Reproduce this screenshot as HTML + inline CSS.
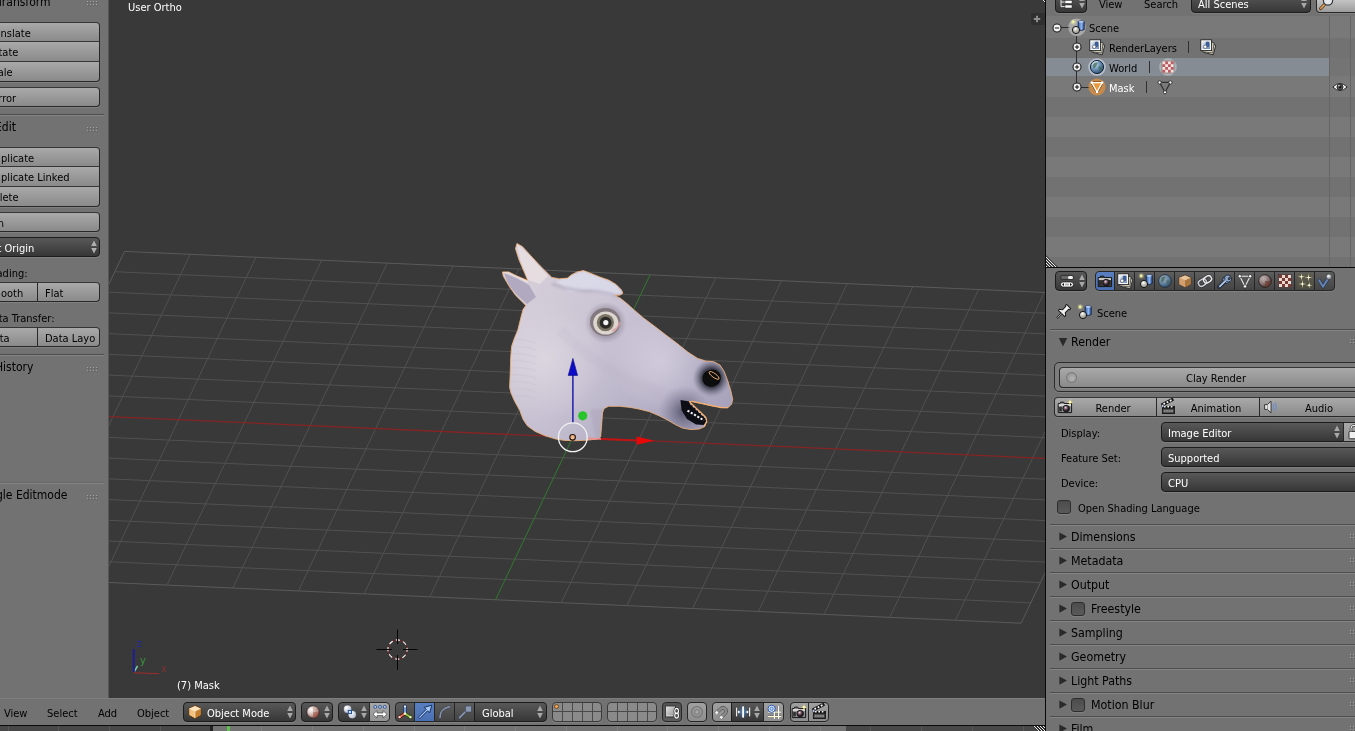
<!DOCTYPE html>
<html lang="en"><head><meta charset="utf-8"><title>Blender</title>
<style>
html,body{margin:0;padding:0;background:#727272;}
body{width:1355px;height:731px;overflow:hidden;position:relative;font-family:"DejaVu Sans Condensed","DejaVu Sans","Liberation Sans",sans-serif;font-size:11px;}
#root{position:absolute;left:0;top:0;width:1355px;height:731px;overflow:hidden;background:#727272;}
.t{position:absolute;white-space:nowrap;display:block;will-change:transform;}
.a{position:absolute;display:block;overflow:visible;}
.r{position:absolute;box-sizing:border-box;}
.btn{position:absolute;box-sizing:border-box;border:1px solid #282828;border-top-color:#363636;background:linear-gradient(#a9a9a9,#8a8a8a);box-shadow:0 1px 0 rgba(255,255,255,.10);}
.menu{position:absolute;box-sizing:border-box;border:1px solid #1c1c1c;background:linear-gradient(#585858,#373737);box-shadow:0 1px 0 rgba(255,255,255,.10);border-radius:4px;}
.tog{position:absolute;box-sizing:border-box;border:1px solid #262626;background:linear-gradient(#a0a0a0,#8e8e8e);box-shadow:0 1px 0 rgba(255,255,255,.10);}
.sep{position:absolute;height:1px;background:#4e4e4e;box-shadow:0 1px 0 rgba(255,255,255,.13);}
.clip{position:absolute;overflow:hidden;}
.clip>.in{position:absolute;width:1355px;height:731px;}
</style></head><body><div id="root">

<div class="r" style="left:109px;top:0;width:936px;height:698px;background:#393939;overflow:hidden">
<svg class="a" style="left:-109px;top:0" width="1355" height="731" viewBox="0 0 1355 731">
<defs><filter id="b03" x="-5%" y="-5%" width="110%" height="110%"><feGaussianBlur stdDeviation=".45"/></filter></defs>
<g stroke-width="1" fill="none"><line x1="-30.1" y1="576.3" x2="124.5" y2="251.4" stroke="#5a5a5a"/><line x1="-30.1" y1="576.3" x2="1021.1" y2="623.2" stroke="#5a5a5a"/><line x1="35.6" y1="579.3" x2="190.2" y2="254.3" stroke="#515151"/><line x1="-20.4" y1="556.0" x2="1030.8" y2="602.9" stroke="#515151"/><line x1="101.3" y1="582.2" x2="255.9" y2="257.2" stroke="#515151"/><line x1="-10.8" y1="535.7" x2="1040.4" y2="582.6" stroke="#515151"/><line x1="167.0" y1="585.1" x2="321.6" y2="260.2" stroke="#515151"/><line x1="-1.1" y1="515.4" x2="1050.1" y2="562.3" stroke="#515151"/><line x1="232.7" y1="588.1" x2="387.3" y2="263.1" stroke="#515151"/><line x1="8.6" y1="495.1" x2="1059.8" y2="542.0" stroke="#515151"/><line x1="298.4" y1="591.0" x2="453.0" y2="266.0" stroke="#515151"/><line x1="18.2" y1="474.8" x2="1069.4" y2="521.7" stroke="#515151"/><line x1="364.1" y1="593.9" x2="518.7" y2="269.0" stroke="#515151"/><line x1="27.9" y1="454.5" x2="1079.1" y2="501.4" stroke="#515151"/><line x1="429.8" y1="596.9" x2="584.4" y2="271.9" stroke="#515151"/><line x1="37.5" y1="434.2" x2="1088.7" y2="481.1" stroke="#515151"/><line x1="561.2" y1="602.7" x2="715.8" y2="277.8" stroke="#515151"/><line x1="56.9" y1="393.6" x2="1108.1" y2="440.4" stroke="#515151"/><line x1="626.9" y1="605.6" x2="781.5" y2="280.7" stroke="#515151"/><line x1="66.5" y1="373.2" x2="1117.7" y2="420.1" stroke="#515151"/><line x1="692.6" y1="608.6" x2="847.2" y2="283.6" stroke="#515151"/><line x1="76.2" y1="352.9" x2="1127.4" y2="399.8" stroke="#515151"/><line x1="758.3" y1="611.5" x2="912.9" y2="286.5" stroke="#515151"/><line x1="85.8" y1="332.6" x2="1137.0" y2="379.5" stroke="#515151"/><line x1="824.0" y1="614.4" x2="978.6" y2="289.5" stroke="#515151"/><line x1="95.5" y1="312.3" x2="1146.7" y2="359.2" stroke="#515151"/><line x1="889.7" y1="617.4" x2="1044.3" y2="292.4" stroke="#515151"/><line x1="105.2" y1="292.0" x2="1156.4" y2="338.9" stroke="#515151"/><line x1="955.4" y1="620.3" x2="1110.0" y2="295.3" stroke="#515151"/><line x1="114.8" y1="271.7" x2="1166.0" y2="318.6" stroke="#515151"/><line x1="1021.1" y1="623.2" x2="1175.7" y2="298.3" stroke="#5a5a5a"/><line x1="124.5" y1="251.4" x2="1175.7" y2="298.3" stroke="#5a5a5a"/><line x1="47.2" y1="413.9" x2="1098.4" y2="460.7" stroke="#862424" stroke-width="1.3"/><line x1="495.5" y1="599.8" x2="650.1" y2="274.8" stroke="#2f7a2f"/></g>
<g filter="url(#b03)"><defs>
<linearGradient id="hg" gradientUnits="userSpaceOnUse" x1="520" y1="270" x2="700" y2="440"><stop offset="0" stop-color="#d7d0da"/><stop offset=".5" stop-color="#c5bfd1"/><stop offset="1" stop-color="#a7a2bb"/></linearGradient>
<radialGradient id="hl1" gradientUnits="userSpaceOnUse" cx="660" cy="362" r="48"><stop offset="0" stop-color="#dcd6e6" stop-opacity=".6"/><stop offset="1" stop-color="#e4deea" stop-opacity="0"/></radialGradient>
<radialGradient id="hl2" gradientUnits="userSpaceOnUse" cx="545" cy="360" r="60"><stop offset="0" stop-color="#e2dce4" stop-opacity=".7"/><stop offset="1" stop-color="#e2dce4" stop-opacity="0"/></radialGradient>
<radialGradient id="sh1" gradientUnits="userSpaceOnUse" cx="684" cy="412" r="26"><stop offset="0" stop-color="#3a3a52" stop-opacity=".75"/><stop offset="1" stop-color="#6a6888" stop-opacity="0"/></radialGradient>
<radialGradient id="sh2" gradientUnits="userSpaceOnUse" cx="711.5" cy="378" r="19"><stop offset=".5" stop-color="#30323e" stop-opacity=".9"/><stop offset="1" stop-color="#70708a" stop-opacity="0"/></radialGradient>
<radialGradient id="eyeg" gradientUnits="userSpaceOnUse" cx="605.8" cy="322.7" r="21"><stop offset=".6" stop-color="#8a8290" stop-opacity=".7"/><stop offset="1" stop-color="#9a92a4" stop-opacity="0"/></radialGradient>
<clipPath id="hc"><path d="M516.9 243.5 L522.4 246.6 L530.6 255.5 L540.1 265.8 L548.4 274.0 L551.8 277.4 L559.3 278.8 L567.5 278.1 L571.6 274.7 L577.1 271.9 L583.5 270.6 L591.0 273.4 L599.6 276.9 L609.2 280.3 L616.0 284.4 L621.5 289.9 L622.9 293.3 L620.1 295.1 L614.7 295.4 L620.1 298.1 L627.0 303.6 L633.8 309.7 L643.4 317.9 L654.3 326.1 L665.6 334.8 L676.9 343.3 L687.8 352.1 L697.4 358.3 L705.6 361.0 L713.8 361.7 L720.0 365.1 L724.1 371.3 L727.5 380.2 L730.9 391.1 L732.7 399.3 L731.6 404.1 L728.2 407.6 L722.0 407.6 L712.5 405.9 L701.5 403.4 L691.9 401.4 L689.3 401.5 L697.0 409.0 L705.7 417.2 L706.7 421.3 L704.3 426.8 L698.9 429.1 L690.7 429.5 L682.5 428.1 L675.6 424.7 L667.4 419.9 L659.2 415.8 L649.6 411.7 L638.7 409.0 L630.4 407.4 L619.4 406.3 L608.5 406.3 L604.1 408.5 L602.5 412.8 L601.4 428.2 L600.6 436.9 L597.5 439.1 L586.6 440.2 L575.7 440.7 L564.7 440.4 L556.0 439.1 L545.0 435.8 L535.2 431.4 L527.5 426.0 L523.1 419.4 L519.8 410.6 L514.4 400.8 L511.0 393.0 L509.6 387.5 L510.3 371.0 L510.7 357.4 L511.6 346.4 L514.4 338.2 L517.8 330.0 L521.0 317.1 L523.0 309.6 L525.8 305.4 L522.4 302.0 L515.5 295.2 L508.7 285.6 L503.2 276.0 L502.5 271.9 L508.7 271.9 L516.9 276.0 L527.8 280.5 L523.0 269.2 L518.9 259.6 L515.5 248.7Z"/></clipPath>
<filter id="b1" x="-20%" y="-20%" width="140%" height="140%"><feGaussianBlur stdDeviation="1.2"/></filter>
<filter id="b05" x="-20%" y="-20%" width="140%" height="140%"><feGaussianBlur stdDeviation=".5"/></filter>
</defs><path d="M516.9 243.5 L522.4 246.6 L530.6 255.5 L540.1 265.8 L548.4 274.0 L551.8 277.4 L559.3 278.8 L567.5 278.1 L571.6 274.7 L577.1 271.9 L583.5 270.6 L591.0 273.4 L599.6 276.9 L609.2 280.3 L616.0 284.4 L621.5 289.9 L622.9 293.3 L620.1 295.1 L614.7 295.4 L620.1 298.1 L627.0 303.6 L633.8 309.7 L643.4 317.9 L654.3 326.1 L665.6 334.8 L676.9 343.3 L687.8 352.1 L697.4 358.3 L705.6 361.0 L713.8 361.7 L720.0 365.1 L724.1 371.3 L727.5 380.2 L730.9 391.1 L732.7 399.3 L731.6 404.1 L728.2 407.6 L722.0 407.6 L712.5 405.9 L701.5 403.4 L691.9 401.4 L689.3 401.5 L697.0 409.0 L705.7 417.2 L706.7 421.3 L704.3 426.8 L698.9 429.1 L690.7 429.5 L682.5 428.1 L675.6 424.7 L667.4 419.9 L659.2 415.8 L649.6 411.7 L638.7 409.0 L630.4 407.4 L619.4 406.3 L608.5 406.3 L604.1 408.5 L602.5 412.8 L601.4 428.2 L600.6 436.9 L597.5 439.1 L586.6 440.2 L575.7 440.7 L564.7 440.4 L556.0 439.1 L545.0 435.8 L535.2 431.4 L527.5 426.0 L523.1 419.4 L519.8 410.6 L514.4 400.8 L511.0 393.0 L509.6 387.5 L510.3 371.0 L510.7 357.4 L511.6 346.4 L514.4 338.2 L517.8 330.0 L521.0 317.1 L523.0 309.6 L525.8 305.4 L522.4 302.0 L515.5 295.2 L508.7 285.6 L503.2 276.0 L502.5 271.9 L508.7 271.9 L516.9 276.0 L527.8 280.5 L523.0 269.2 L518.9 259.6 L515.5 248.7Z" fill="url(#hg)"/><g clip-path="url(#hc)"><rect x="495" y="235" width="245" height="215" fill="url(#hl2)"/><rect x="495" y="235" width="245" height="215" fill="url(#hl1)"/><path d="M556 282 L570 276 L584 271 L600 277 L617 285 L622 293 L612 296 L590 290 L570 292Z" fill="#dfe0ee" opacity=".7" filter="url(#b1)"/><path d="M552 284 Q575 292 596 291 Q610 293 619 297" stroke="#a9a2b8" stroke-width="3" fill="none" opacity=".5" filter="url(#b1)"/><path d="M516.9 244 L530 256 L548 276 L540 284 L528 280 L521 262Z" fill="#e7dfe0" opacity=".85"/><path d="M504 273 L516 278 L529 285 L536 297 L527 304 L516 294 L508 284Z" fill="#aaa3bb" opacity=".85" filter="url(#b05)"/><path d="M503 272.5 L509 272.5 L517 276.5 L528 281.5" stroke="#eee6e6" stroke-width="1.6" fill="none"/><path d="M510 340 Q522 338 536 343" stroke="#bdb5c6" stroke-width="1.6" fill="none" opacity=".18" filter="url(#b05)"/><path d="M510 347 Q522 345 536 350" stroke="#bdb5c6" stroke-width="1.6" fill="none" opacity=".18" filter="url(#b05)"/><path d="M510 354 Q522 352 536 357" stroke="#bdb5c6" stroke-width="1.6" fill="none" opacity=".18" filter="url(#b05)"/><path d="M510 361 Q522 359 536 364" stroke="#bdb5c6" stroke-width="1.6" fill="none" opacity=".18" filter="url(#b05)"/><path d="M510 368 Q522 366 536 371" stroke="#bdb5c6" stroke-width="1.6" fill="none" opacity=".18" filter="url(#b05)"/><path d="M510 375 Q522 373 536 378" stroke="#bdb5c6" stroke-width="1.6" fill="none" opacity=".18" filter="url(#b05)"/><path d="M510 382 Q522 380 536 385" stroke="#bdb5c6" stroke-width="1.6" fill="none" opacity=".18" filter="url(#b05)"/><path d="M510 389 Q522 387 536 392" stroke="#bdb5c6" stroke-width="1.6" fill="none" opacity=".18" filter="url(#b05)"/><path d="M510 396 Q522 394 536 399" stroke="#bdb5c6" stroke-width="1.6" fill="none" opacity=".18" filter="url(#b05)"/><path d="M560 330 Q600 372 660 392 Q690 400 700 402" stroke="#b8b0c4" stroke-width="10" fill="none" opacity=".16" filter="url(#b1)"/><path d="M604 408 L604 440 L596 440 L590 410Z" fill="#aaa4b8" opacity=".5" filter="url(#b1)"/><rect x="650" y="380" width="70" height="60" fill="url(#sh1)"/><rect x="688" y="353" width="48" height="50" fill="url(#sh2)"/><circle cx="605.8" cy="322.7" r="21" fill="url(#eyeg)"/></g><ellipse cx="605.2" cy="322" rx="15.2" ry="14" fill="#7d7378" opacity=".85" filter="url(#b05)"/><ellipse cx="605.8" cy="323" rx="12.6" ry="11.6" fill="#ddd5cf"/><path d="M612 331 Q618 329 620 322" stroke="#d9a0a4" stroke-width="2" fill="none" opacity=".8"/><circle cx="605.4" cy="322.6" r="8.6" fill="#787364"/><circle cx="605.6" cy="322.8" r="6" fill="#2c2a28" filter="url(#b05)"/><circle cx="605.8" cy="322.6" r="2.6" fill="#f4f4f4"/><ellipse cx="711.6" cy="378.2" rx="9.3" ry="8.6" fill="#07070a" transform="rotate(-15 711.6 378.2)"/><ellipse cx="714.1" cy="375.4" rx="6" ry="2" fill="#0c0a0a" stroke="#f0b070" stroke-width=".9" transform="rotate(36 714.1 375.4)"/><path d="M680.5 400 L689.3 401.5 L705.7 417.2 L706.7 421.3 L703.5 425 L696 424.6 L687 419 L681.5 410Z" fill="#101018" filter="url(#b05)"/><path d="M687.5 410.6 L704 420.4" stroke="#f4f4f8" stroke-width="2" stroke-dasharray="2.2 1.6" fill="none"/><path d="M690 403.4 L705 417.6" stroke="#e8e4f0" stroke-width="1.1" stroke-dasharray="2.4 1.4" fill="none" opacity=".85"/><path d="M516.9 243.5 L522.4 246.6 L530.6 255.5 L540.1 265.8 L548.4 274.0 L551.8 277.4 L559.3 278.8 L567.5 278.1 L571.6 274.7 L577.1 271.9 L583.5 270.6 L591.0 273.4 L599.6 276.9 L609.2 280.3 L616.0 284.4 L621.5 289.9 L622.9 293.3 L620.1 295.1 L614.7 295.4 L620.1 298.1 L627.0 303.6 L633.8 309.7 L643.4 317.9 L654.3 326.1 L665.6 334.8 L676.9 343.3 L687.8 352.1 L697.4 358.3 L705.6 361.0 L713.8 361.7 L720.0 365.1 L724.1 371.3 L727.5 380.2 L730.9 391.1 L732.7 399.3 L731.6 404.1 L728.2 407.6 L722.0 407.6 L712.5 405.9 L701.5 403.4 L691.9 401.4 L689.3 401.5 L697.0 409.0 L705.7 417.2 L706.7 421.3 L704.3 426.8 L698.9 429.1 L690.7 429.5 L682.5 428.1 L675.6 424.7 L667.4 419.9 L659.2 415.8 L649.6 411.7 L638.7 409.0 L630.4 407.4 L619.4 406.3 L608.5 406.3 L604.1 408.5 L602.5 412.8 L601.4 428.2 L600.6 436.9 L597.5 439.1 L586.6 440.2 L575.7 440.7 L564.7 440.4 L556.0 439.1 L545.0 435.8 L535.2 431.4 L527.5 426.0 L523.1 419.4 L519.8 410.6 L514.4 400.8 L511.0 393.0 L509.6 387.5 L510.3 371.0 L510.7 357.4 L511.6 346.4 L514.4 338.2 L517.8 330.0 L521.0 317.1 L523.0 309.6 L525.8 305.4 L522.4 302.0 L515.5 295.2 L508.7 285.6 L503.2 276.0 L502.5 271.9 L508.7 271.9 L516.9 276.0 L527.8 280.5 L523.0 269.2 L518.9 259.6 L515.5 248.7Z" fill="none" stroke="#efb07a" stroke-width="1" stroke-linejoin="round" opacity=".85"/><path d="M691.9 401.4 L701.5 403.4 L712.5 405.9 L722 407.6 L728.2 407.6 M689.3 401.5 L697 409 L705.7 417.2 L706.7 421.3 L704.3 426.8" fill="none" stroke="#f4b070" stroke-width="1.2"/></g>
<path d="M588 438.4 L601 439 " stroke="#f09090" stroke-width="1.6"/><path d="M601 439 L637 440.5" stroke="#c01414" stroke-width="1.8"/><path d="M636.6 436.6 L654.6 440.8 L636.6 444.8Z" fill="#e80808"/><path d="M572.9 375 L572.9 423" stroke="#1212a8" stroke-width="1.4"/><path d="M572.9 358.4 L577.6 375.4 L568.2 375.4Z" fill="#0c0cc8" stroke="#08087a" stroke-width=".6"/><circle cx="582.7" cy="415.8" r="4.6" fill="#27c52b"/><circle cx="572.8" cy="437.3" r="14.4" fill="none" stroke="#f2f2f2" stroke-width="1.3"/><circle cx="572.5999999999999" cy="437.3" r="2.8" fill="#f0b68a" stroke="#1a1008" stroke-width="1.1"/>
<circle cx="397.5" cy="649.5" r="9.6" fill="none" stroke="#742222" stroke-width="1"/><circle cx="397.5" cy="649.5" r="9.6" fill="none" stroke="#ffffff" stroke-width="1.1" stroke-dasharray="4.3 3.24" stroke-dashoffset="2"/><path d="M376.5 649.5 L392.0 649.5 M403.0 649.5 L417.5 649.5 M397.5 629.5 L397.5 644.0 M397.5 655.0 L397.5 670.0" stroke="#050505" stroke-width="1"/>
<path d="M133.8 672.8 L159.2 673.8" stroke="#a02c2c" stroke-width="1.1"/><path d="M134.3 671.7 L137.6 665.8" stroke="#7fd0a0" stroke-width="1.5"/><path d="M133.8 672 L133.8 649" stroke="#1e1e98" stroke-width="2"/><text x="161.5" y="672" font-family='DejaVu Sans Condensed,DejaVu Sans,Liberation Sans,sans-serif' font-size="10" fill="#a03030" opacity=".75">x</text><text x="140" y="664" font-family='DejaVu Sans Condensed,DejaVu Sans,Liberation Sans,sans-serif' font-size="11" fill="#389638">y</text><text x="136.8" y="646.6" font-family='DejaVu Sans Condensed,DejaVu Sans,Liberation Sans,sans-serif' font-size="11" fill="#2828a0">z</text>
</svg>
</div>
<span class="t" style="left:127.9px;top:0.2px;font-size:11px;line-height:15px;color:#fff;">User Ortho</span>
<span class="t" style="left:177.3px;top:677.5px;font-size:11px;line-height:15px;color:#fff;">(7) Mask</span>
<div class="r" style="left:0;top:0;width:109px;height:698px;background:#727272;border-right:1px solid #575757"></div>
<div class="clip" style="left:0px;top:0px;width:108px;height:698px"><div class="in" style="left:0px;top:0px">
<span class="t" style="right:1304.8px;top:-6.5px;font-size:12px;line-height:16px;color:#000;">Transform</span>
<svg class="a" style="left:87px;top:1px" width="12" height="6"><rect x="1" y="1" width="1" height="1" fill="#5e5e5e"/><rect x="0" y="0" width="1" height="1" fill="#a4a4a4"/><rect x="1" y="4" width="1" height="1" fill="#5e5e5e"/><rect x="0" y="3" width="1" height="1" fill="#a4a4a4"/><rect x="4" y="1" width="1" height="1" fill="#5e5e5e"/><rect x="3" y="0" width="1" height="1" fill="#a4a4a4"/><rect x="4" y="4" width="1" height="1" fill="#5e5e5e"/><rect x="3" y="3" width="1" height="1" fill="#a4a4a4"/><rect x="7" y="1" width="1" height="1" fill="#5e5e5e"/><rect x="6" y="0" width="1" height="1" fill="#a4a4a4"/><rect x="7" y="4" width="1" height="1" fill="#5e5e5e"/><rect x="6" y="3" width="1" height="1" fill="#a4a4a4"/><rect x="10" y="1" width="1" height="1" fill="#5e5e5e"/><rect x="9" y="0" width="1" height="1" fill="#a4a4a4"/><rect x="10" y="4" width="1" height="1" fill="#5e5e5e"/><rect x="9" y="3" width="1" height="1" fill="#a4a4a4"/></svg>
<div class="btn" style="left:-10px;top:22px;width:110px;height:20px;border-radius:0 4px 0 0;"></div>
<span class="t" style="right:1324.4px;top:26px;font-size:11px;line-height:15px;color:#000;">Translate</span>
<div class="btn" style="left:-10px;top:41px;width:110px;height:21px;border-radius:0;"></div>
<span class="t" style="right:1336.4px;top:45px;font-size:11px;line-height:15px;color:#000;">Rotate</span>
<div class="btn" style="left:-10px;top:61px;width:110px;height:21px;border-radius:0 0 4px 0;"></div>
<span class="t" style="right:1342.4px;top:65px;font-size:11px;line-height:15px;color:#000;">Scale</span>
<div class="btn" style="left:-10px;top:87px;width:110px;height:20px;border-radius:4px;"></div>
<span class="t" style="right:1339.0px;top:91px;font-size:11px;line-height:15px;color:#000;">Mirror</span>
<div class="sep" style="left:0;top:114px;width:104px"></div>
<span class="t" style="right:1339.0px;top:118.5px;font-size:12px;line-height:16px;color:#000;">Edit</span>
<svg class="a" style="left:87px;top:127px" width="12" height="6"><rect x="1" y="1" width="1" height="1" fill="#5e5e5e"/><rect x="0" y="0" width="1" height="1" fill="#a4a4a4"/><rect x="1" y="4" width="1" height="1" fill="#5e5e5e"/><rect x="0" y="3" width="1" height="1" fill="#a4a4a4"/><rect x="4" y="1" width="1" height="1" fill="#5e5e5e"/><rect x="3" y="0" width="1" height="1" fill="#a4a4a4"/><rect x="4" y="4" width="1" height="1" fill="#5e5e5e"/><rect x="3" y="3" width="1" height="1" fill="#a4a4a4"/><rect x="7" y="1" width="1" height="1" fill="#5e5e5e"/><rect x="6" y="0" width="1" height="1" fill="#a4a4a4"/><rect x="7" y="4" width="1" height="1" fill="#5e5e5e"/><rect x="6" y="3" width="1" height="1" fill="#a4a4a4"/><rect x="10" y="1" width="1" height="1" fill="#5e5e5e"/><rect x="9" y="0" width="1" height="1" fill="#a4a4a4"/><rect x="10" y="4" width="1" height="1" fill="#5e5e5e"/><rect x="9" y="3" width="1" height="1" fill="#a4a4a4"/></svg>
<div class="btn" style="left:-10px;top:147px;width:110px;height:20px;border-radius:0 4px 0 0;"></div>
<span class="t" style="right:1321.3px;top:151px;font-size:11px;line-height:15px;color:#000;">Duplicate</span>
<div class="btn" style="left:-10px;top:166px;width:110px;height:21px;border-radius:0;"></div>
<span class="t" style="right:1285.8px;top:170px;font-size:11px;line-height:15px;color:#000;">Duplicate Linked</span>
<div class="btn" style="left:-10px;top:186px;width:110px;height:21px;border-radius:0 0 4px 0;"></div>
<span class="t" style="right:1336.4px;top:190px;font-size:11px;line-height:15px;color:#000;">Delete</span>
<div class="btn" style="left:-10px;top:212px;width:110px;height:20px;border-radius:4px;"></div>
<span class="t" style="right:1351.5px;top:216px;font-size:11px;line-height:15px;color:#000;">Join</span>
<div class="menu" style="left:-10px;top:237px;width:110px;height:20px;"></div>
<span class="t" style="right:1320.4px;top:240.5px;font-size:11px;line-height:15px;color:#fff;">Set Origin</span>
<svg class="a" style="left:90px;top:239px" width="8" height="16" viewBox="0 0 8 16"><path d="M4 1.5 L6.8 7 L1.2 7Z M4 14.5 L6.8 9 L1.2 9Z" fill="#b0b0b0"/></svg>
<span class="t" style="right:1327.9px;top:265.5px;font-size:11px;line-height:15px;color:#000;">Shading:</span>
<div class="btn" style="left:-10px;top:282px;width:48px;height:20px;border-radius:0;"></div>
<span class="t" style="right:1331.5px;top:285.5px;font-size:11px;line-height:15px;color:#000;">Smooth</span>
<div class="btn" style="left:37px;top:282px;width:63px;height:20px;border-radius:0 4px 4px 0;"></div>
<span class="t" style="left:45.1px;top:285.5px;font-size:11px;line-height:15px;color:#000;">Flat</span>
<span class="t" style="right:1300.8px;top:310.5px;font-size:11px;line-height:15px;color:#000;">Data Transfer:</span>
<div class="btn" style="left:-10px;top:327px;width:48px;height:20px;border-radius:0;"></div>
<span class="t" style="right:1345.7px;top:330.5px;font-size:11px;line-height:15px;color:#000;">Data</span>
<div class="btn" style="left:37px;top:327px;width:63px;height:20px;border-radius:0 4px 4px 0;overflow:hidden"></div>
<div class="clip" style="left:38px;top:328px;width:58.400000000000006px;height:18px"><div class="in" style="left:-38px;top:-328px">
<span class="t" style="left:45.1px;top:330.5px;font-size:11px;line-height:15px;color:#000;">Data Layout</span>
</div></div>
<div class="sep" style="left:0;top:354px;width:104px"></div>
<span class="t" style="right:1321.3px;top:359px;font-size:12px;line-height:16px;color:#000;">History</span>
<svg class="a" style="left:87px;top:367px" width="12" height="6"><rect x="1" y="1" width="1" height="1" fill="#5e5e5e"/><rect x="0" y="0" width="1" height="1" fill="#a4a4a4"/><rect x="1" y="4" width="1" height="1" fill="#5e5e5e"/><rect x="0" y="3" width="1" height="1" fill="#a4a4a4"/><rect x="4" y="1" width="1" height="1" fill="#5e5e5e"/><rect x="3" y="0" width="1" height="1" fill="#a4a4a4"/><rect x="4" y="4" width="1" height="1" fill="#5e5e5e"/><rect x="3" y="3" width="1" height="1" fill="#a4a4a4"/><rect x="7" y="1" width="1" height="1" fill="#5e5e5e"/><rect x="6" y="0" width="1" height="1" fill="#a4a4a4"/><rect x="7" y="4" width="1" height="1" fill="#5e5e5e"/><rect x="6" y="3" width="1" height="1" fill="#a4a4a4"/><rect x="10" y="1" width="1" height="1" fill="#5e5e5e"/><rect x="9" y="0" width="1" height="1" fill="#a4a4a4"/><rect x="10" y="4" width="1" height="1" fill="#5e5e5e"/><rect x="9" y="3" width="1" height="1" fill="#a4a4a4"/></svg>
<div class="r" style="left:0;top:482px;width:104px;height:1px;background:#686868"></div><div class="r" style="left:0;top:483px;width:104px;height:1px;background:#858585"></div>
<span class="t" style="right:1287.9px;top:486.5px;font-size:12px;line-height:16px;color:#000;">Toggle Editmode</span>
<svg class="a" style="left:87px;top:495px" width="12" height="6"><rect x="1" y="1" width="1" height="1" fill="#5e5e5e"/><rect x="0" y="0" width="1" height="1" fill="#a4a4a4"/><rect x="1" y="4" width="1" height="1" fill="#5e5e5e"/><rect x="0" y="3" width="1" height="1" fill="#a4a4a4"/><rect x="4" y="1" width="1" height="1" fill="#5e5e5e"/><rect x="3" y="0" width="1" height="1" fill="#a4a4a4"/><rect x="4" y="4" width="1" height="1" fill="#5e5e5e"/><rect x="3" y="3" width="1" height="1" fill="#a4a4a4"/><rect x="7" y="1" width="1" height="1" fill="#5e5e5e"/><rect x="6" y="0" width="1" height="1" fill="#a4a4a4"/><rect x="7" y="4" width="1" height="1" fill="#5e5e5e"/><rect x="6" y="3" width="1" height="1" fill="#a4a4a4"/><rect x="10" y="1" width="1" height="1" fill="#5e5e5e"/><rect x="9" y="0" width="1" height="1" fill="#a4a4a4"/><rect x="10" y="4" width="1" height="1" fill="#5e5e5e"/><rect x="9" y="3" width="1" height="1" fill="#a4a4a4"/></svg>
</div></div>
<div class="r" style="left:0;top:698px;width:1046px;height:27px;background:#727272;border-top:1px solid #7e7e7e"></div>
<div class="r" style="left:0;top:725px;width:1046px;height:1px;background:#0c0c0c"></div>
<div class="r" style="left:0;top:726px;width:1046px;height:5px;background:#484848"></div>
<div class="r" style="left:211px;top:726px;width:635px;height:5px;background:#737373"></div>
<div class="r" style="left:8px;top:726px;width:1px;height:5px;background:rgba(255,255,255,.09)"></div><div class="r" style="left:58px;top:726px;width:1px;height:5px;background:rgba(255,255,255,.09)"></div><div class="r" style="left:109px;top:726px;width:1px;height:5px;background:rgba(255,255,255,.09)"></div><div class="r" style="left:160px;top:726px;width:1px;height:5px;background:rgba(255,255,255,.09)"></div><div class="r" style="left:211px;top:726px;width:1px;height:5px;background:rgba(255,255,255,.09)"></div><div class="r" style="left:261px;top:726px;width:1px;height:5px;background:rgba(255,255,255,.09)"></div><div class="r" style="left:312px;top:726px;width:1px;height:5px;background:rgba(255,255,255,.09)"></div><div class="r" style="left:363px;top:726px;width:1px;height:5px;background:rgba(255,255,255,.09)"></div><div class="r" style="left:414px;top:726px;width:1px;height:5px;background:rgba(255,255,255,.09)"></div><div class="r" style="left:464px;top:726px;width:1px;height:5px;background:rgba(255,255,255,.09)"></div><div class="r" style="left:515px;top:726px;width:1px;height:5px;background:rgba(255,255,255,.09)"></div><div class="r" style="left:566px;top:726px;width:1px;height:5px;background:rgba(255,255,255,.09)"></div><div class="r" style="left:617px;top:726px;width:1px;height:5px;background:rgba(255,255,255,.09)"></div><div class="r" style="left:667px;top:726px;width:1px;height:5px;background:rgba(255,255,255,.09)"></div><div class="r" style="left:718px;top:726px;width:1px;height:5px;background:rgba(255,255,255,.09)"></div><div class="r" style="left:769px;top:726px;width:1px;height:5px;background:rgba(255,255,255,.09)"></div><div class="r" style="left:820px;top:726px;width:1px;height:5px;background:rgba(255,255,255,.09)"></div><div class="r" style="left:870px;top:726px;width:1px;height:5px;background:rgba(255,255,255,.09)"></div><div class="r" style="left:921px;top:726px;width:1px;height:5px;background:rgba(255,255,255,.09)"></div><div class="r" style="left:972px;top:726px;width:1px;height:5px;background:rgba(255,255,255,.09)"></div><div class="r" style="left:1023px;top:726px;width:1px;height:5px;background:rgba(255,255,255,.09)"></div><div class="r" style="left:1073px;top:726px;width:1px;height:5px;background:rgba(255,255,255,.09)"></div>
<div class="r" style="left:210px;top:726px;width:3px;height:5px;background:#222"></div>
<div class="r" style="left:227px;top:726px;width:3px;height:5px;background:#5ec24e"></div>
<span class="t" style="right:1328.0px;top:706.3px;font-size:11px;line-height:15px;color:#000;">View</span>
<span class="t" style="left:46.8px;top:706.3px;font-size:11px;line-height:15px;color:#000;">Select</span>
<span class="t" style="left:97.5px;top:706.3px;font-size:11px;line-height:15px;color:#000;">Add</span>
<span class="t" style="left:136.6px;top:706.3px;font-size:11px;line-height:15px;color:#000;">Object</span>
<div class="menu" style="left:183px;top:702px;width:113px;height:20px;"></div>
<span class="t" style="left:206.8px;top:706px;font-size:11px;line-height:15px;color:#fff;">Object Mode</span>
<svg class="a" style="left:285.5px;top:704px" width="8" height="16" viewBox="0 0 8 16"><path d="M4 1.5 L6.8 7 L1.2 7Z M4 14.5 L6.8 9 L1.2 9Z" fill="#a8a8a8"/></svg>
<div class="menu" style="left:301px;top:702px;width:32px;height:20px;"></div>
<svg class="a" style="left:322.6px;top:704px" width="8" height="16" viewBox="0 0 8 16"><path d="M4 1.5 L6.8 7 L1.2 7Z M4 14.5 L6.8 9 L1.2 9Z" fill="#a8a8a8"/></svg>
<div class="menu" style="left:338px;top:702px;width:32px;height:20px;border-radius:4px 0 0 4px"></div>
<svg class="a" style="left:359.6px;top:704px" width="8" height="16" viewBox="0 0 8 16"><path d="M4 1.5 L6.8 7 L1.2 7Z M4 14.5 L6.8 9 L1.2 9Z" fill="#a8a8a8"/></svg>
<div class="tog" style="left:369px;top:702px;width:21px;height:20px;border-radius:0 4px 4px 0;background:linear-gradient(#a8a8a8,#949494)"></div>
<div class="tog" style="left:395px;top:702px;width:20px;height:20px;border-radius:4px 0 0 4px;background:linear-gradient(#5c5c5c,#444)"></div>
<div class="tog" style="left:414px;top:702px;width:21px;height:20px;border-radius:0;background:linear-gradient(#5a7fc0,#4a70b4)"></div>
<div class="tog" style="left:434px;top:702px;width:21px;height:20px;border-radius:0;background:linear-gradient(#5c5c5c,#444)"></div>
<div class="tog" style="left:454px;top:702px;width:21px;height:20px;border-radius:0;background:linear-gradient(#5c5c5c,#444)"></div>
<div class="menu" style="left:474px;top:702px;width:73px;height:20px;border-radius:0 4px 4px 0"></div>
<span class="t" style="left:482.0px;top:706px;font-size:11px;line-height:15px;color:#fff;">Global</span>
<svg class="a" style="left:536.4px;top:704px" width="8" height="16" viewBox="0 0 8 16"><path d="M4 1.5 L6.8 7 L1.2 7Z M4 14.5 L6.8 9 L1.2 9Z" fill="#a8a8a8"/></svg>
<div class="r" style="left:552px;top:702px;width:50px;height:20px;border:1px solid #3a3a3a;border-radius:4px;background:#8a8a8a;box-shadow:0 1px 0 rgba(255,255,255,.1)"></div><div class="r" style="left:562px;top:703px;width:1px;height:18px;background:#4a4a4a"></div><div class="r" style="left:572px;top:703px;width:1px;height:18px;background:#4a4a4a"></div><div class="r" style="left:582px;top:703px;width:1px;height:18px;background:#4a4a4a"></div><div class="r" style="left:592px;top:703px;width:1px;height:18px;background:#4a4a4a"></div><div class="r" style="left:553px;top:711px;width:48px;height:1px;background:#4a4a4a"></div>
<div class="r" style="left:607px;top:702px;width:50px;height:20px;border:1px solid #3a3a3a;border-radius:4px;background:#8a8a8a;box-shadow:0 1px 0 rgba(255,255,255,.1)"></div><div class="r" style="left:617px;top:703px;width:1px;height:18px;background:#4a4a4a"></div><div class="r" style="left:627px;top:703px;width:1px;height:18px;background:#4a4a4a"></div><div class="r" style="left:637px;top:703px;width:1px;height:18px;background:#4a4a4a"></div><div class="r" style="left:647px;top:703px;width:1px;height:18px;background:#4a4a4a"></div><div class="r" style="left:608px;top:711px;width:48px;height:1px;background:#4a4a4a"></div>
<div class="r" style="left:554px;top:704px;width:5px;height:5px;border-radius:50%;background:#f2a65a;border:1px solid #6b4a20"></div>
<div class="tog" style="left:662px;top:702px;width:20px;height:20px;border-radius:4px;background:linear-gradient(#525252,#5e5e5e)"></div>
<div class="tog" style="left:687px;top:702px;width:20px;height:20px;border-radius:4px;"></div>
<div class="tog" style="left:712px;top:702px;width:20px;height:20px;border-radius:4px 0 0 4px;"></div>
<div class="menu" style="left:731px;top:702px;width:33px;height:20px;border-radius:0"></div>
<svg class="a" style="left:753px;top:704px" width="8" height="16" viewBox="0 0 8 16"><path d="M4 1.5 L6.8 7 L1.2 7Z M4 14.5 L6.8 9 L1.2 9Z" fill="#a8a8a8"/></svg>
<div class="tog" style="left:763px;top:702px;width:21px;height:20px;border-radius:0 4px 4px 0;"></div>
<div class="tog" style="left:790px;top:702px;width:19px;height:20px;border-radius:4px 0 0 4px;"></div>
<div class="tog" style="left:808px;top:702px;width:21px;height:20px;border-radius:0 4px 4px 0;"></div>
<svg class="a" style="left:187px;top:704px;" width="16" height="16" viewBox="0 0 16 16"><path d="M8 1.5 L14 4.3 L14 11.2 L8 14.5 L2 11.2 L2 4.3Z" fill="#e9a659" stroke="#5a3a14" stroke-width="1"/><path d="M8 1.9 L13.6 4.5 L8 7.3 L2.4 4.5Z" fill="#fbe3bd"/><path d="M8 7.3 L13.6 4.5 L13.6 11 L8 14Z" fill="#c47f2e"/><path d="M2.4 4.6 L8 7.4 L8 14 L2.4 11Z" fill="#f3c17f"/><path d="M2.4 4.5 L8 7.3 L13.6 4.5 M8 7.3 L8 14" stroke="#fff3dc" stroke-width=".7" fill="none" opacity=".8"/></svg>
<svg class="a" style="left:305px;top:704px;" width="16" height="16" viewBox="0 0 16 16"><defs><radialGradient id="g1" cx=".35" cy=".3" r=".8"><stop offset="0" stop-color="#ffffff"/><stop offset=".45" stop-color="#d8c4c0"/><stop offset="1" stop-color="#7a3e34"/></radialGradient></defs><circle cx="8" cy="8" r="6.2" fill="url(#g1)" stroke="#2a2020" stroke-width=".8"/><path d="M8 8 L8 14.2 A6.2 6.2 0 0 0 14.2 8Z" fill="#9a4a3a" opacity=".55"/><path d="M8 8 L8 1.8 A6.2 6.2 0 0 1 14.2 8Z" fill="#b07a70" opacity=".35"/></svg>
<svg class="a" style="left:341.5px;top:704px;" width="16" height="16" viewBox="0 0 16 16"><defs><radialGradient id="g2" cx=".35" cy=".3" r=".8"><stop offset="0" stop-color="#ffffff"/><stop offset="1" stop-color="#aab4c4"/></radialGradient></defs><circle cx="5.6" cy="5.2" r="4.1" fill="url(#g2)" stroke="#303640" stroke-width=".6"/><circle cx="10.2" cy="10.6" r="4.1" fill="url(#g2)" stroke="#303640" stroke-width=".6"/><rect x="6.3" y="6.4" width="3.2" height="3.2" fill="#cfe0ff" stroke="#23509c" stroke-width="1"/></svg>
<svg class="a" style="left:372px;top:704px;" width="16" height="16" viewBox="0 0 16 16"><circle cx="3.2" cy="2.9" r="1.5" fill="#b8c8e0" stroke="#2d5596" stroke-width=".9"/><circle cx="8" cy="2.9" r="1.5" fill="#b8c8e0" stroke="#2d5596" stroke-width=".9"/><circle cx="12.8" cy="2.9" r="1.5" fill="#b8c8e0" stroke="#2d5596" stroke-width=".9"/><path d="M1 10.3 L5 6.6 L5 9 L11 9 L11 6.6 L15 10.3 L11 14 L11 11.6 L5 11.6 L5 14Z" fill="#fff" stroke="#444" stroke-width=".7"/></svg>
<svg class="a" style="left:397px;top:704px;" width="16" height="16" viewBox="0 0 16 16"><path d="M8 9.6 L8 2.2" stroke="#13306e" stroke-width="3.2" stroke-linecap="round"/><path d="M8 9.6 L2.2 13.4" stroke="#5a1410" stroke-width="3.2" stroke-linecap="round"/><path d="M8 9.6 L13.8 13.4" stroke="#2e4a10" stroke-width="3.2" stroke-linecap="round"/><path d="M8 9.6 L8 2.4" stroke="#8ab0f0" stroke-width="1.7" stroke-linecap="round"/><path d="M8 9.6 L2.4 13.3" stroke="#e8755a" stroke-width="1.7" stroke-linecap="round"/><path d="M8 9.6 L13.6 13.3" stroke="#9ccf4a" stroke-width="1.7" stroke-linecap="round"/><circle cx="8" cy="2.6" r="1" fill="#fff"/><circle cx="2.5" cy="13.2" r="1.1" fill="#ffe8e0"/><circle cx="13.5" cy="13.2" r="1.1" fill="#f0ffd8"/><circle cx="8" cy="9.6" r="1.2" fill="#fff8e0"/></svg>
<svg class="a" style="left:416.5px;top:704px;" width="16" height="16" viewBox="0 0 16 16"><path d="M1.4 13.2 L2.8 14.6 L10.6 6.8 L12.6 8.8 L14.8 1.2 L7.2 3.4 L9.2 5.4 Z" fill="#a8c8f8" stroke="#14305e" stroke-width="1" stroke-linejoin="round"/></svg>
<svg class="a" style="left:436.5px;top:704px;" width="16" height="16" viewBox="0 0 16 16"><path d="M3 13.4 C3 8 6.5 3.8 12.4 2.8" fill="none" stroke="#3a4456" stroke-width="3" stroke-linecap="round" opacity=".55"/><path d="M3 13.4 C3 8 6.5 3.8 12.4 2.8" fill="none" stroke="#8b98b2" stroke-width="1.6" stroke-linecap="round"/></svg>
<svg class="a" style="left:456.5px;top:704px;" width="16" height="16" viewBox="0 0 16 16"><path d="M2.6 13.6 L9.4 6.8" stroke="#3a4456" stroke-width="3" stroke-linecap="round" opacity=".55"/><path d="M2.6 13.6 L9.4 6.8" stroke="#8b98b2" stroke-width="1.6" stroke-linecap="round"/><rect x="8.4" y="2" width="6" height="6" fill="#8b98b2" stroke="#3a4456" stroke-width=".6"/></svg>
<svg class="a" style="left:664px;top:704px;" width="16" height="16" viewBox="0 0 16 16"><defs><linearGradient id="g3" x1="0" y1="0" x2="1" y2="1"><stop offset="0" stop-color="#e8e8e8"/><stop offset="1" stop-color="#8c8c8c"/></linearGradient></defs><rect x="1.4" y="2" width="10" height="11" fill="url(#g3)" stroke="#2a2a2a" stroke-width=".8"/><path d="M2.6 11.6 L9 11.6" stroke="#fff" stroke-width=".8" stroke-dasharray="1 1"/><ellipse cx="12.6" cy="7" rx="1.8" ry="2.6" fill="none" stroke="#222" stroke-width="2.4"/><ellipse cx="12.6" cy="11.6" rx="1.8" ry="2.6" fill="none" stroke="#222" stroke-width="2.4"/><ellipse cx="12.6" cy="7" rx="1.8" ry="2.6" fill="none" stroke="#fff" stroke-width="1.2"/><ellipse cx="12.6" cy="11.6" rx="1.8" ry="2.6" fill="none" stroke="#fff" stroke-width="1.2"/></svg>
<svg class="a" style="left:689px;top:704px;" width="16" height="16" viewBox="0 0 16 16"><circle cx="8" cy="8" r="5.4" fill="none" stroke="#787878" stroke-width="1.3"/><circle cx="8" cy="8" r="2.2" fill="#a8a8a8" stroke="#808080" stroke-width="1.1"/></svg>
<svg class="a" style="left:714px;top:704px;" width="16" height="16" viewBox="0 0 16 16"><g transform="rotate(45 8 8)"><path d="M3.4 13.6 L3.4 6.6 A4.6 4.6 0 0 1 12.6 6.6 L12.6 13.6 L9.8 13.6 L9.8 6.8 A1.8 1.8 0 0 0 6.2 6.8 L6.2 13.6Z" fill="#8c8c8c" stroke="#5a5a5a" stroke-width=".9"/><rect x="3.4" y="11" width="2.8" height="2.6" fill="#f0f0f0"/><rect x="9.8" y="11" width="2.8" height="2.6" fill="#f0f0f0"/></g></svg>
<svg class="a" style="left:735px;top:704px;" width="16" height="16" viewBox="0 0 16 16"><defs><radialGradient id="g4"><stop offset="0" stop-color="#5a9ad8" stop-opacity=".9"/><stop offset="1" stop-color="#3a6aa8" stop-opacity="0"/></radialGradient></defs><ellipse cx="8" cy="8" rx="6" ry="7.5" fill="url(#g4)"/><rect x="7.2" y="2.4" width="1.8" height="11.2" fill="#fff"/><rect x="1" y="3.6" width="1.2" height="8.8" fill="#e8e8e8"/><rect x="14" y="3.6" width="1.2" height="8.8" fill="#e8e8e8"/><path d="M3 6.4 L5.6 8 L3 9.6Z M13.2 6.4 L10.6 8 L13.2 9.6Z" fill="#fff"/></svg>
<svg class="a" style="left:765.5px;top:704px;" width="16" height="16" viewBox="0 0 16 16"><path d="M8.4 2 L8.4 15 M12.6 2 L12.6 15 M2 8.2 L15.4 8.2 M2 12.6 L15.4 12.6" stroke="#2a2a2a" stroke-width="2" opacity=".55"/><path d="M8.4 2 L8.4 15 M12.6 2 L12.6 15" stroke="#fff" stroke-width="1.3"/><path d="M2 8.2 L15.4 8.2 M2 12.6 L15.4 12.6" stroke="#fffbd8" stroke-width="1.3"/><circle cx="5.6" cy="4.8" r="3.6" fill="#e8f0ff" stroke="#2a58b0" stroke-width="1"/><circle cx="5.6" cy="4.8" r="1.7" fill="#b4ccf4" stroke="#3f6fc8" stroke-width=".8"/></svg>
<svg class="a" style="left:791px;top:704px;" width="16" height="16" viewBox="0 0 16 16"><defs><radialGradient id="g5" cx=".4" cy=".35"><stop offset="0" stop-color="#eadfe4"/><stop offset=".5" stop-color="#76586a"/><stop offset="1" stop-color="#231a20"/></radialGradient></defs><path d="M1.2 4.6 L3 4.6 L3.6 3.2 L6.8 3.2 L7.4 4.6 L14.6 4.6 L14.6 13.6 L1.2 13.6Z" fill="#8f8f8f" stroke="#161616" stroke-width="1"/><rect x="1.8" y="5.2" width="12.2" height="1.6" fill="#e8e8e8"/><rect x="2.2" y="8" width="2.6" height="4.4" fill="#2e2e2e"/><circle cx="9.2" cy="9.6" r="3.3" fill="url(#g5)" stroke="#161616" stroke-width=".9"/><path d="M13 0 L13.7 2.6 L16 3.2 L13.7 3.9 L13 6.4 L12.3 3.9 L10 3.2 L12.3 2.6Z" fill="#fff27a"/><circle cx="13" cy="3.2" r="1" fill="#fffde0"/></svg>
<svg class="a" style="left:810.5px;top:704px;" width="16" height="16" viewBox="0 0 16 16"><rect x="2.4" y="7.4" width="12" height="7.2" fill="#3a3a3a" stroke="#141414" stroke-width=".9"/><path d="M2.6 8.6 L14.2 8.6" stroke="#111" stroke-width="1.8"/><path d="M4 7.8 L5.6 7.8 M7.4 7.8 L9 7.8 M10.8 7.8 L12.4 7.8" stroke="#fff" stroke-width="1.6"/><rect x="3.6" y="10.6" width="9.6" height="2.8" fill="#7a7a7a" opacity=".8"/><path d="M3.6 12 L13.2 12" stroke="#c8c8c8" stroke-width=".6" stroke-dasharray="1.6 1"/><g transform="rotate(-27 2.6 6.6)"><rect x="2.2" y="4.4" width="12.6" height="2.6" fill="#1a1a1a" stroke="#111" stroke-width=".6"/><path d="M4 5.7 L5.8 5.7 M7.6 5.7 L9.4 5.7 M11.2 5.7 L13 5.7" stroke="#fff" stroke-width="1.7"/></g><circle cx="2.6" cy="7" r="1.3" fill="#c8d4f0" stroke="#334" stroke-width=".5"/></svg>
<div class="r" style="left:1045px;top:0;width:1px;height:731px;background:#080808"></div>
<div class="r" style="left:1046px;top:0;width:309px;height:16px;background:#727272"></div>
<div class="menu" style="left:1055px;top:-7px;width:32px;height:20px;"></div>
<svg class="a" style="left:1077.5px;top:-6px" width="8" height="16" viewBox="0 0 8 16"><path d="M4 1.5 L6.8 7 L1.2 7Z M4 14.5 L6.8 9 L1.2 9Z" fill="#a8a8a8"/></svg>
<span class="t" style="left:1098.6px;top:-3px;font-size:11px;line-height:15px;color:#000;">View</span>
<span class="t" style="left:1144.1px;top:-3px;font-size:11px;line-height:15px;color:#000;">Search</span>
<div class="menu" style="left:1191px;top:-7px;width:120px;height:20px;"></div>
<span class="t" style="left:1198.3px;top:-3px;font-size:11px;line-height:15px;color:#fff;">All Scenes</span>
<svg class="a" style="left:1299.5px;top:-6px" width="8" height="16" viewBox="0 0 8 16"><path d="M4 1.5 L6.8 7 L1.2 7Z M4 14.5 L6.8 9 L1.2 9Z" fill="#a8a8a8"/></svg>
<div class="btn" style="left:1316px;top:-7px;width:84px;height:20px;border-radius:4px;background:linear-gradient(#d8d8d8,#9c9c9c);"></div>
<div class="r" style="left:1046px;top:16px;width:309px;height:22px;background:#797979"></div>
<div class="r" style="left:1046px;top:38px;width:309px;height:20px;background:#727272"></div>
<div class="r" style="left:1046px;top:58px;width:309px;height:18px;background:#797979"></div>
<div class="r" style="left:1046px;top:76px;width:309px;height:21px;background:#797979"></div>
<div class="r" style="left:1046px;top:97px;width:309px;height:20px;background:#727272"></div>
<div class="r" style="left:1046px;top:117px;width:309px;height:20px;background:#797979"></div>
<div class="r" style="left:1046px;top:137px;width:309px;height:20px;background:#727272"></div>
<div class="r" style="left:1046px;top:157px;width:309px;height:20px;background:#797979"></div>
<div class="r" style="left:1046px;top:177px;width:309px;height:20px;background:#727272"></div>
<div class="r" style="left:1046px;top:197px;width:309px;height:20px;background:#797979"></div>
<div class="r" style="left:1046px;top:217px;width:309px;height:20px;background:#727272"></div>
<div class="r" style="left:1046px;top:237px;width:309px;height:20px;background:#797979"></div>
<div class="r" style="left:1046px;top:257px;width:309px;height:10px;background:#727272"></div>
<div class="r" style="left:1046px;top:58px;width:283px;height:18px;background:#858c94"></div>
<div class="r" style="left:1330px;top:58px;width:25px;height:18px;background:#747474"></div>
<div class="r" style="left:1329px;top:16px;width:1px;height:251px;background:#666"></div>
<div class="r" style="left:1350px;top:16px;width:1px;height:251px;background:#666"></div>
<span class="t" style="left:1089.3px;top:20.5px;font-size:11px;line-height:15px;color:#000;">Scene</span>
<span class="t" style="left:1109.0px;top:40.7px;font-size:11px;line-height:15px;color:#000;">RenderLayers</span>
<span class="t" style="left:1109.0px;top:60.8px;font-size:11px;line-height:15px;color:#000;">World</span>
<span class="t" style="left:1109.0px;top:80.8px;font-size:11px;line-height:15px;color:#fff;">Mask</span>
<div class="r" style="left:1061px;top:27px;width:9px;height:1px;background:#2c2c2c"></div>
<div class="r" style="left:1076px;top:36px;width:1px;height:52px;background:#2c2c2c"></div>
<div class="r" style="left:1080px;top:87px;width:10px;height:1px;background:#2c2c2c"></div>
<svg class="a" style="left:1051.9px;top:22.8px;" width="10" height="10" viewBox="0 0 10 10"><circle cx="5" cy="5" r="4" fill="#f4f4f4" stroke="#1e1e1e" stroke-width="1.1"/><path d="M2.9 5 L7.1 5" stroke="#111" stroke-width="1"/></svg>
<svg class="a" style="left:1071.5px;top:42.3px;" width="10" height="10" viewBox="0 0 10 10"><circle cx="5" cy="5" r="4" fill="#f4f4f4" stroke="#1e1e1e" stroke-width="1.1"/><path d="M2.9 5 L7.1 5" stroke="#111" stroke-width="1"/><path d="M5 2.9 L5 7.1" stroke="#111" stroke-width="1"/></svg>
<svg class="a" style="left:1071.5px;top:62.4px;" width="10" height="10" viewBox="0 0 10 10"><circle cx="5" cy="5" r="4" fill="#f4f4f4" stroke="#1e1e1e" stroke-width="1.1"/><path d="M2.9 5 L7.1 5" stroke="#111" stroke-width="1"/><path d="M5 2.9 L5 7.1" stroke="#111" stroke-width="1"/></svg>
<svg class="a" style="left:1071.5px;top:82.4px;" width="10" height="10" viewBox="0 0 10 10"><circle cx="5" cy="5" r="4" fill="#f4f4f4" stroke="#1e1e1e" stroke-width="1.1"/><path d="M2.9 5 L7.1 5" stroke="#111" stroke-width="1"/><path d="M5 2.9 L5 7.1" stroke="#111" stroke-width="1"/></svg>
<svg class="a" style="left:1069px;top:19px;" width="16" height="16" viewBox="0 0 16 16"><circle cx="8" cy="8.2" r="8.8" fill="#ffffff" opacity=".36"/><defs><linearGradient id="g6" x1="0" y1="0" x2="1" y2="0"><stop offset="0" stop-color="#3563ae"/><stop offset=".55" stop-color="#8db3ea"/><stop offset="1" stop-color="#2c5296"/></linearGradient><radialGradient id="g7" cx=".4" cy=".3"><stop offset="0" stop-color="#ffffff"/><stop offset="1" stop-color="#a9a9a0"/></radialGradient></defs><circle cx="4.2" cy="2.9" r="2.6" fill="#f8f8a0" opacity=".35"/><circle cx="4.2" cy="2.9" r="1.3" fill="#f2f2a8"/><path d="M9.2 2.6 Q12.2 .8 15.2 2.6 L15.2 10.6 Q12.2 12.4 9.2 10.6Z" fill="url(#g6)" stroke="#12254a" stroke-width=".9"/><ellipse cx="12.2" cy="2.7" rx="2.7" ry="1" fill="#b9d2f6" opacity=".9"/><circle cx="7" cy="11" r="3.6" fill="url(#g7)" stroke="#141414" stroke-width="1"/></svg>
<svg class="a" style="left:1089px;top:39px;" width="16" height="16" viewBox="0 0 16 16"><defs><linearGradient id="g8" x1="0" y1="0" x2="1" y2="1"><stop offset="0" stop-color="#dfe8f8"/><stop offset="1" stop-color="#6d8cc0"/></linearGradient></defs><g transform="rotate(14 9 10)"><rect x="4.6" y="4.6" width="10" height="10" fill="#e9e5d2" stroke="#2a2a2a" stroke-width=".9"/></g><g transform="rotate(7 8 9)"><rect x="3" y="3" width="10.4" height="10.4" fill="#d8d4c4" stroke="#2a2a2a" stroke-width=".7"/></g><rect x=".8" y=".8" width="10.8" height="10.8" fill="#fdfdfd" stroke="#1e1e1e" stroke-width=".9"/><rect x="2.4" y="2.4" width="7.6" height="7.6" fill="url(#g8)"/><rect x="6.2" y="3" width="2.6" height="4.6" rx=".8" fill="#3a62a8" stroke="#1c2f58" stroke-width=".5"/><circle cx="5.2" cy="7.8" r="1.7" fill="#fff" stroke="#222" stroke-width=".5"/><circle cx="3.6" cy="3.6" r=".7" fill="#f4f4b0"/></svg>
<svg class="a" style="left:1199.5px;top:39px;" width="16" height="16" viewBox="0 0 16 16"><defs><linearGradient id="g9" x1="0" y1="0" x2="1" y2="1"><stop offset="0" stop-color="#dfe8f8"/><stop offset="1" stop-color="#6d8cc0"/></linearGradient></defs><g transform="rotate(14 9 10)"><rect x="4.6" y="4.6" width="10" height="10" fill="#e9e5d2" stroke="#2a2a2a" stroke-width=".9"/></g><g transform="rotate(7 8 9)"><rect x="3" y="3" width="10.4" height="10.4" fill="#d8d4c4" stroke="#2a2a2a" stroke-width=".7"/></g><rect x=".8" y=".8" width="10.8" height="10.8" fill="#fdfdfd" stroke="#1e1e1e" stroke-width=".9"/><rect x="2.4" y="2.4" width="7.6" height="7.6" fill="url(#g9)"/><rect x="6.2" y="3" width="2.6" height="4.6" rx=".8" fill="#3a62a8" stroke="#1c2f58" stroke-width=".5"/><circle cx="5.2" cy="7.8" r="1.7" fill="#fff" stroke="#222" stroke-width=".5"/><circle cx="3.6" cy="3.6" r=".7" fill="#f4f4b0"/></svg>
<svg class="a" style="left:1089px;top:59px;" width="16" height="16" viewBox="0 0 16 16"><circle cx="8" cy="8" r="8.8" fill="#e8eeff" opacity=".5"/><defs><radialGradient id="g10" cx=".35" cy=".3" r=".75"><stop offset="0" stop-color="#d4e4f4"/><stop offset=".5" stop-color="#6d93b8"/><stop offset="1" stop-color="#2d4b6a"/></radialGradient></defs><circle cx="8" cy="8" r="6.6" fill="url(#g10)" stroke="#16273a" stroke-width="1"/><path d="M4.4 4.6 Q6.4 3.2 8.2 3.8 Q9 5.2 7.6 6 Q7.8 7.6 6.2 8.2 Q5.6 10 4.6 9.4 Q3.2 7.2 4.4 4.6Z" fill="#3e6a4e" opacity=".75"/><path d="M9.6 7.6 Q11.6 6.8 12.6 8.2 Q12.8 10.4 11 11.8 Q9.6 11 9.8 9.4Z" fill="#3e6a4e" opacity=".75"/><path d="M3.2 5.4 Q5 2.6 8.6 2.4" stroke="#fff" stroke-width="1" fill="none" opacity=".6"/></svg>
<svg class="a" style="left:1160px;top:59px;" width="16" height="16" viewBox="0 0 16 16"><circle cx="8" cy="8" r="8.8" fill="#fff" opacity=".32"/><rect x="2" y="2" width="12" height="12" fill="#f0e4e0" stroke="#8a7a78" stroke-width=".8"/><rect x="5.2" y="2.4" width="2.8" height="2.8" fill="#b4434a" opacity=".85"/><rect x="10.8" y="2.4" width="2.8" height="2.8" fill="#b4434a" opacity=".85"/><rect x="2.4" y="5.2" width="2.8" height="2.8" fill="#b4434a" opacity=".85"/><rect x="8.0" y="5.2" width="2.8" height="2.8" fill="#b4434a" opacity=".85"/><rect x="5.2" y="8.0" width="2.8" height="2.8" fill="#b4434a" opacity=".85"/><rect x="10.8" y="8.0" width="2.8" height="2.8" fill="#b4434a" opacity=".85"/><rect x="2.4" y="10.8" width="2.8" height="2.8" fill="#b4434a" opacity=".85"/><rect x="8.0" y="10.8" width="2.8" height="2.8" fill="#b4434a" opacity=".85"/></svg>
<svg class="a" style="left:1089px;top:79.4px;" width="16" height="16" viewBox="0 0 16 16"><circle cx="8" cy="8" r="8.6" fill="#e0923a" opacity=".72"/><path d="M2.8 3.6 L13.2 3.6 L8 13Z" fill="none" stroke="#8a4a0a" stroke-width="2.6" stroke-linejoin="round"/><path d="M2.8 3.6 L13.2 3.6 L8 13Z" fill="#e69a3c" stroke="#fff" stroke-width="1.3" stroke-linejoin="round"/><circle cx="2.8" cy="3.6" r="1.3" fill="#fff"/><circle cx="13.2" cy="3.6" r="1.3" fill="#fff"/><circle cx="8" cy="13" r="1.3" fill="#fff"/></svg>
<svg class="a" style="left:1157px;top:78.8px;" width="16" height="16" viewBox="0 0 16 16"><path d="M2.6 3.4 L13.4 3.4 L8 13.2Z" fill="none" stroke="#303030" stroke-width="1.2" stroke-linejoin="round"/><circle cx="2.6" cy="3.4" r="1.6" fill="#f4f4f4" stroke="#222" stroke-width=".8"/><circle cx="13.4" cy="3.4" r="1.6" fill="#f4f4f4" stroke="#222" stroke-width=".8"/><circle cx="8" cy="13.2" r="1.6" fill="#f4f4f4" stroke="#222" stroke-width=".8"/></svg>
<svg class="a" style="left:1332px;top:79px;" width="16" height="16" viewBox="0 0 16 16"><path d="M.8 8 Q8 1 15.2 8 Q8 15 .8 8Z" fill="#fff" stroke="#2a2a2a" stroke-width="1"/><circle cx="8" cy="8" r="3.1" fill="#555" stroke="#1a1a1a" stroke-width=".8"/><circle cx="8" cy="8" r="1.4" fill="#111"/><circle cx="7" cy="6.8" r=".8" fill="#fff"/></svg>
<div class="r" style="left:1187.5px;top:41px;width:1.5px;height:12px;background:#303030"></div>
<div class="r" style="left:1148.5px;top:61px;width:1.5px;height:12px;background:#303030"></div>
<div class="r" style="left:1145.5px;top:81px;width:1.5px;height:12px;background:#303030"></div>
<svg class="a" style="left:1058px;top:-6px;" width="16" height="16" viewBox="0 0 16 16"><path d="M3 0 L3 12.6 M3 3.4 L7 3.4 M3 8 L7 8 M3 12.6 L7 12.6" stroke="#e8e8e8" stroke-width="1" fill="none"/><rect x="7" y="1.8" width="7" height="3" fill="#fff" stroke="#222" stroke-width=".5"/><rect x="7" y="6.4" width="7" height="3" fill="#fff" stroke="#222" stroke-width=".5"/><rect x="7" y="11" width="7" height="3" fill="#fff" stroke="#222" stroke-width=".5"/></svg>
<svg class="a" style="left:1319px;top:-6px;" width="16" height="16" viewBox="0 0 16 16"><path d="M5.4 10.6 L1.6 14.6" stroke="#5a3a1a" stroke-width="3" stroke-linecap="round"/><path d="M5.4 10.6 L1.8 14.4" stroke="#d89a5a" stroke-width="1.6" stroke-linecap="round"/><circle cx="9" cy="6.6" r="4.6" fill="#eef2f8" fill-opacity=".8" stroke="#3a3a3a" stroke-width="1.3"/><path d="M6.4 5.4 Q7.4 3.4 9.6 3.4" stroke="#fff" stroke-width="1" fill="none"/></svg>
<div class="r" style="left:1046px;top:267px;width:309px;height:1px;background:#080808"></div>
<div class="r" style="left:1046px;top:268px;width:309px;height:27px;background:#727272"></div>
<div class="menu" style="left:1055px;top:271px;width:32px;height:20px;"></div>
<svg class="a" style="left:1077.5px;top:273px" width="8" height="16" viewBox="0 0 8 16"><path d="M4 1.5 L6.8 7 L1.2 7Z M4 14.5 L6.8 9 L1.2 9Z" fill="#a8a8a8"/></svg>
<div class="tog" style="left:1095px;top:271px;width:20px;height:20px;border-radius:4px 0 0 4px;background:linear-gradient(#5a7fc0,#4a70b4);"></div>
<div class="tog" style="left:1114px;top:271px;width:21px;height:20px;border-radius:0;background:linear-gradient(#5e5e5e,#444);"></div>
<div class="tog" style="left:1134px;top:271px;width:21px;height:20px;border-radius:0;background:linear-gradient(#5e5e5e,#444);"></div>
<div class="tog" style="left:1154px;top:271px;width:21px;height:20px;border-radius:0;background:linear-gradient(#5e5e5e,#444);"></div>
<div class="tog" style="left:1174px;top:271px;width:21px;height:20px;border-radius:0;background:linear-gradient(#5e5e5e,#444);"></div>
<div class="tog" style="left:1194px;top:271px;width:21px;height:20px;border-radius:0;background:linear-gradient(#5e5e5e,#444);"></div>
<div class="tog" style="left:1214px;top:271px;width:21px;height:20px;border-radius:0;background:linear-gradient(#5e5e5e,#444);"></div>
<div class="tog" style="left:1234px;top:271px;width:21px;height:20px;border-radius:0;background:linear-gradient(#5e5e5e,#444);"></div>
<div class="tog" style="left:1254px;top:271px;width:21px;height:20px;border-radius:0;background:linear-gradient(#5e5e5e,#444);"></div>
<div class="tog" style="left:1274px;top:271px;width:21px;height:20px;border-radius:0;background:linear-gradient(#5e5e5e,#444);"></div>
<div class="tog" style="left:1294px;top:271px;width:21px;height:20px;border-radius:0;background:linear-gradient(#5e5e5e,#444);"></div>
<div class="tog" style="left:1314px;top:271px;width:21px;height:20px;border-radius:0 4px 4px 0;background:linear-gradient(#5e5e5e,#444);"></div>
<svg class="a" style="left:1058.5px;top:273px;" width="16" height="16" viewBox="0 0 16 16"><rect x="1.6" y="2.4" width="12.8" height="4" rx="2" fill="#6a6a6a" stroke="#1a1a1a" stroke-width=".7"/><rect x="9" y="2.9" width="5" height="3" rx="1.5" fill="#f4f4f4"/><rect x="1.6" y="9" width="12.8" height="5" rx="2.4" fill="#fafafa" stroke="#1a1a1a" stroke-width=".7"/><path d="M3 11.5 L5 10 L5 13Z M13 11.5 L11 10 L11 13Z" fill="#111"/><rect x="6" y="10.6" width="4" height="1.8" fill="#aaa"/></svg>
<svg class="a" style="left:1096.5px;top:273px;" width="16" height="16" viewBox="0 0 16 16"><defs><radialGradient id="g11" cx=".4" cy=".35"><stop offset="0" stop-color="#eadfe4"/><stop offset=".5" stop-color="#76586a"/><stop offset="1" stop-color="#231a20"/></radialGradient></defs><path d="M1.2 4.6 L3 4.6 L3.6 3.2 L6.8 3.2 L7.4 4.6 L14.6 4.6 L14.6 13.6 L1.2 13.6Z" fill="#3c3c3c" stroke="#161616" stroke-width="1"/><rect x="1.8" y="5.2" width="12.2" height="1.6" fill="#e8e8e8"/><rect x="2.2" y="8" width="2.6" height="4.4" fill="#2e2e2e"/><circle cx="9.2" cy="9.6" r="3.3" fill="url(#g11)" stroke="#161616" stroke-width=".9"/></svg>
<svg class="a" style="left:1116.5px;top:273px;" width="16" height="16" viewBox="0 0 16 16"><defs><linearGradient id="g12" x1="0" y1="0" x2="1" y2="1"><stop offset="0" stop-color="#dfe8f8"/><stop offset="1" stop-color="#6d8cc0"/></linearGradient></defs><g transform="rotate(14 9 10)"><rect x="4.6" y="4.6" width="10" height="10" fill="#e9e5d2" stroke="#2a2a2a" stroke-width=".9"/></g><g transform="rotate(7 8 9)"><rect x="3" y="3" width="10.4" height="10.4" fill="#d8d4c4" stroke="#2a2a2a" stroke-width=".7"/></g><rect x=".8" y=".8" width="10.8" height="10.8" fill="#fdfdfd" stroke="#1e1e1e" stroke-width=".9"/><rect x="2.4" y="2.4" width="7.6" height="7.6" fill="url(#g12)"/><rect x="6.2" y="3" width="2.6" height="4.6" rx=".8" fill="#3a62a8" stroke="#1c2f58" stroke-width=".5"/><circle cx="5.2" cy="7.8" r="1.7" fill="#fff" stroke="#222" stroke-width=".5"/><circle cx="3.6" cy="3.6" r=".7" fill="#f4f4b0"/></svg>
<svg class="a" style="left:1136.5px;top:273px;" width="16" height="16" viewBox="0 0 16 16"><defs><linearGradient id="g13" x1="0" y1="0" x2="1" y2="0"><stop offset="0" stop-color="#3563ae"/><stop offset=".55" stop-color="#8db3ea"/><stop offset="1" stop-color="#2c5296"/></linearGradient><radialGradient id="g14" cx=".4" cy=".3"><stop offset="0" stop-color="#ffffff"/><stop offset="1" stop-color="#a9a9a0"/></radialGradient></defs><circle cx="4.2" cy="2.9" r="2.6" fill="#f8f8a0" opacity=".35"/><circle cx="4.2" cy="2.9" r="1.3" fill="#f2f2a8"/><path d="M9.2 2.6 Q12.2 .8 15.2 2.6 L15.2 10.6 Q12.2 12.4 9.2 10.6Z" fill="url(#g13)" stroke="#12254a" stroke-width=".9"/><ellipse cx="12.2" cy="2.7" rx="2.7" ry="1" fill="#b9d2f6" opacity=".9"/><circle cx="7" cy="11" r="3.6" fill="url(#g14)" stroke="#141414" stroke-width="1"/></svg>
<svg class="a" style="left:1156.5px;top:273px;" width="16" height="16" viewBox="0 0 16 16"><defs><radialGradient id="g15" cx=".35" cy=".3" r=".75"><stop offset="0" stop-color="#a9b9c9"/><stop offset=".6" stop-color="#5d7d9d"/><stop offset="1" stop-color="#2d4560"/></radialGradient></defs><circle cx="8" cy="8" r="6.4" fill="url(#g15)" stroke="#1e2b3a" stroke-width=".8"/><path d="M4.4 4.6 Q6.4 3.2 8.2 3.8 Q9 5.2 7.6 6 Q7.8 7.6 6.2 8.2 Q5.6 10 4.6 9.4 Q3.2 7.2 4.4 4.6Z" fill="#49685a" opacity=".8"/><path d="M9.6 7.6 Q11.6 6.8 12.6 8.2 Q12.8 10.4 11 11.8 Q9.6 11 9.8 9.4Z" fill="#49685a" opacity=".8"/></svg>
<svg class="a" style="left:1176.5px;top:273px;" width="16" height="16" viewBox="0 0 16 16"><path d="M8 2 L14 4.6 L14 11.4 L8 14.4 L2 11.4 L2 4.6Z" fill="#cf9b68" stroke="#4a3420" stroke-width=".8"/><path d="M8 2.4 L13.6 4.8 L8 7.4 L2.4 4.8Z" fill="#e8c49c"/><path d="M8 7.4 L13.6 4.8 L13.6 11.2 L8 14Z" fill="#a9753f"/><path d="M2.4 4.8 L8 7.4 L8 14 L2.4 11.2Z" fill="#d2a070"/></svg>
<svg class="a" style="left:1196.5px;top:273px;" width="16" height="16" viewBox="0 0 16 16"><g transform="rotate(-32 8 8)"><rect x=".8" y="5" width="8.4" height="6" rx="3" fill="none" stroke="#2a2a2a" stroke-width="2.8"/><rect x="6.8" y="5" width="8.4" height="6" rx="3" fill="none" stroke="#2a2a2a" stroke-width="2.8"/><rect x=".8" y="5" width="8.4" height="6" rx="3" fill="none" stroke="#c9ced6" stroke-width="1.5"/><rect x="6.8" y="5" width="8.4" height="6" rx="3" fill="none" stroke="#e6e8ec" stroke-width="1.5"/></g></svg>
<svg class="a" style="left:1216.5px;top:273px;" width="16" height="16" viewBox="0 0 16 16"><path d="M2.2 13.8 L9 7 " stroke="#1e2838" stroke-width="4" stroke-linecap="round"/><path d="M9.2 3.4 A3.6 3.6 0 1 0 12.8 7.4 L10.6 7.6 L8.8 5.6Z" fill="#8ea7cc" stroke="#1e2838" stroke-width="1"/><path d="M9 2.2 Q12 1.4 13.6 3.2 L11 5.4 L11.4 6.6 L13 6.4 L14.6 4.6 Q15.2 7.4 13 8.6 Q11.4 9.4 9.6 8.6 L3.4 14.6 Q2.2 15 1.6 14.2 Q1.2 13.4 1.8 12.6 L7.8 6.6 Q7 3.6 9 2.2Z" fill="#8ea7cc" stroke="#1e2838" stroke-width=".9"/><path d="M3 13.4 L8.6 7.8" stroke="#d0def4" stroke-width="1"/></svg>
<svg class="a" style="left:1236.5px;top:273px;" width="16" height="16" viewBox="0 0 16 16"><path d="M2.8 3.2 L13.2 3.2 L8 13.4Z" fill="none" stroke="#e8e8e8" stroke-width="1.1" stroke-linejoin="round"/><circle cx="2.8" cy="3.2" r="1.7" fill="#fff" stroke="#222" stroke-width=".7"/><circle cx="13.2" cy="3.2" r="1.7" fill="#fff" stroke="#222" stroke-width=".7"/><circle cx="8" cy="13.4" r="1.7" fill="#fff" stroke="#222" stroke-width=".7"/></svg>
<svg class="a" style="left:1256.5px;top:273px;" width="16" height="16" viewBox="0 0 16 16"><defs><radialGradient id="g16" cx=".35" cy=".3" r=".8"><stop offset="0" stop-color="#c8c0c0"/><stop offset=".5" stop-color="#8a7674"/><stop offset="1" stop-color="#3c2826"/></radialGradient></defs><circle cx="8" cy="8" r="6.3" fill="url(#g16)" stroke="#1a1414" stroke-width=".8"/><path d="M8 8 L8 14.3 A6.3 6.3 0 0 0 14.3 8Z" fill="#70352c" opacity=".6"/><path d="M8 8 L8 1.7 A6.3 6.3 0 0 0 1.7 8Z" fill="#a0908e" opacity=".3"/></svg>
<svg class="a" style="left:1276.5px;top:273px;" width="16" height="16" viewBox="0 0 16 16"><rect x="1.6" y="1.6" width="12.8" height="12.8" fill="#ead8d2" stroke="#3a2a2a" stroke-width=".7"/><rect x="2.0" y="2.0" width="3" height="3" fill="#7a3a34"/><rect x="8.0" y="2.0" width="3" height="3" fill="#7a3a34"/><rect x="5.0" y="5.0" width="3" height="3" fill="#7a3a34"/><rect x="11.0" y="5.0" width="3" height="3" fill="#7a3a34"/><rect x="2.0" y="8.0" width="3" height="3" fill="#7a3a34"/><rect x="8.0" y="8.0" width="3" height="3" fill="#7a3a34"/><rect x="5.0" y="11.0" width="3" height="3" fill="#7a3a34"/><rect x="11.0" y="11.0" width="3" height="3" fill="#7a3a34"/></svg>
<svg class="a" style="left:1296.5px;top:273px;" width="16" height="16" viewBox="0 0 16 16"><rect x="0" y="0" width="16" height="16" fill="#6a6030" opacity=".25"/><path d="M4.4 0.19999999999999973 L4.9 3.3 L8.0 3.8 L4.9 4.3 L4.4 7.4 L3.9000000000000004 4.3 L0.8000000000000003 3.8 L3.9000000000000004 3.3Z" fill="#f4eebc"/><circle cx="4.4" cy="3.8" r=".9" fill="#fffef0"/><path d="M11.6 0.5999999999999996 L12.1 4.1 L15.6 4.6 L12.1 5.1 L11.6 8.6 L11.1 5.1 L7.6 4.6 L11.1 4.1Z" fill="#f4eebc"/><circle cx="11.6" cy="4.6" r=".9" fill="#fffef0"/><path d="M5.4 6.8 L5.9 10.5 L9.600000000000001 11 L5.9 11.5 L5.4 15.2 L4.9 11.5 L1.2000000000000002 11 L4.9 10.5Z" fill="#f4eebc"/><circle cx="5.4" cy="11" r=".9" fill="#fffef0"/><path d="M12.2 9.0 L12.7 11.7 L15.399999999999999 12.2 L12.7 12.7 L12.2 15.399999999999999 L11.7 12.7 L9.0 12.2 L11.7 11.7Z" fill="#f4eebc"/><circle cx="12.2" cy="12.2" r=".9" fill="#fffef0"/></svg>
<svg class="a" style="left:1316.5px;top:273px;" width="16" height="16" viewBox="0 0 16 16"><defs><radialGradient id="g17" cx=".4" cy=".35"><stop offset="0" stop-color="#fff"/><stop offset="1" stop-color="#8a8f98"/></radialGradient></defs><path d="M2.2 7.4 L6 13.8 L11.8 4.4" fill="none" stroke="#1c2c48" stroke-width="3.4" stroke-linejoin="round" stroke-linecap="round" opacity=".7"/><path d="M2.2 7.4 L6 13.8 L11.8 4.4" fill="none" stroke="#6482b4" stroke-width="2" stroke-linejoin="round" stroke-linecap="round"/><circle cx="12" cy="3.8" r="2.9" fill="url(#g17)" stroke="#333" stroke-width=".6"/></svg>
<div class="r" style="left:1046px;top:295px;width:309px;height:436px;background:#727272"></div>
<span class="t" style="left:1096.7px;top:305.5px;font-size:11px;line-height:15px;color:#000;">Scene</span>
<div class="sep" style="left:1050px;top:329px;width:320px"></div>
<svg class="a" style="left:1058px;top:337.5px" width="10" height="9"><path d="M0.8 0 L9.2 0 L5 8.4Z" fill="#2a2a2a"/></svg>
<span class="t" style="left:1070.8px;top:333.8px;font-size:12.3px;line-height:16px;color:#000;">Render</span>
<svg class="a" style="left:1350px;top:339px" width="12" height="6"><rect x="1" y="1" width="1" height="1" fill="#5e5e5e"/><rect x="0" y="0" width="1" height="1" fill="#a4a4a4"/><rect x="1" y="4" width="1" height="1" fill="#5e5e5e"/><rect x="0" y="3" width="1" height="1" fill="#a4a4a4"/><rect x="4" y="1" width="1" height="1" fill="#5e5e5e"/><rect x="3" y="0" width="1" height="1" fill="#a4a4a4"/><rect x="4" y="4" width="1" height="1" fill="#5e5e5e"/><rect x="3" y="3" width="1" height="1" fill="#a4a4a4"/><rect x="7" y="1" width="1" height="1" fill="#5e5e5e"/><rect x="6" y="0" width="1" height="1" fill="#a4a4a4"/><rect x="7" y="4" width="1" height="1" fill="#5e5e5e"/><rect x="6" y="3" width="1" height="1" fill="#a4a4a4"/><rect x="10" y="1" width="1" height="1" fill="#5e5e5e"/><rect x="9" y="0" width="1" height="1" fill="#a4a4a4"/><rect x="10" y="4" width="1" height="1" fill="#5e5e5e"/><rect x="9" y="3" width="1" height="1" fill="#a4a4a4"/></svg>
<div class="r" style="left:1054px;top:362px;width:346px;height:30px;border:1px solid #2c2c2c;border-radius:5px;background:#7c7c7c;box-shadow:0 1px 0 rgba(255,255,255,.1)"></div>
<div class="btn" style="left:1059px;top:367px;width:336px;height:21px;border-radius:4px;"></div>
<div class="r" style="left:1066px;top:372px;width:11px;height:11px;border-radius:50%;background:radial-gradient(circle at 60% 60%,#b4b4b4,#8a8a8a);border:1px solid #777"></div>
<span class="t" style="left:1216.3px;transform:translateX(-50%);top:371px;font-size:11px;line-height:15px;color:#000;">Clay Render</span>
<div class="btn" style="left:1054px;top:397px;width:103px;height:20px;border-radius:4px 0 0 4px;"></div>
<div class="btn" style="left:1156px;top:397px;width:104px;height:20px;border-radius:0;"></div>
<div class="btn" style="left:1259px;top:397px;width:104px;height:20px;border-radius:0;"></div>
<span class="t" style="left:1112.8px;transform:translateX(-50%);top:401px;font-size:11px;line-height:15px;color:#000;">Render</span>
<span class="t" style="left:1215.7px;transform:translateX(-50%);top:401px;font-size:11px;line-height:15px;color:#000;">Animation</span>
<span class="t" style="left:1319px;transform:translateX(-50%);top:401px;font-size:11px;line-height:15px;color:#000;">Audio</span>
<span class="t" style="left:1060.7px;top:426px;font-size:11px;line-height:15px;color:#000;">Display:</span>
<div class="menu" style="left:1161px;top:422px;width:183px;height:20px;border-radius:4px 0 0 4px"></div>
<span class="t" style="left:1167.7px;top:426px;font-size:11px;line-height:15px;color:#fff;">Image Editor</span>
<svg class="a" style="left:1333.2px;top:424px" width="8" height="16" viewBox="0 0 8 16"><path d="M4 1.5 L6.8 7 L1.2 7Z M4 14.5 L6.8 9 L1.2 9Z" fill="#a8a8a8"/></svg>
<div class="tog" style="left:1343px;top:422px;width:22px;height:20px;border-radius:0;background:linear-gradient(#a8a8a8,#949494)"></div>
<span class="t" style="left:1060.7px;top:451px;font-size:11px;line-height:15px;color:#000;">Feature Set:</span>
<div class="menu" style="left:1161px;top:447px;width:239px;height:20px;"></div>
<span class="t" style="left:1167.7px;top:451px;font-size:11px;line-height:15px;color:#fff;">Supported</span>
<span class="t" style="left:1060.7px;top:476px;font-size:11px;line-height:15px;color:#000;">Device:</span>
<div class="menu" style="left:1161px;top:472px;width:239px;height:20px;"></div>
<span class="t" style="left:1167.7px;top:476px;font-size:11px;line-height:15px;color:#fff;">CPU</span>
<div class="r" style="left:1057px;top:500px;width:14px;height:14px;border-radius:3px;border:1px solid #2e2e2e;background:linear-gradient(#4c4c4c,#5a5a5a);box-shadow:0 1px 0 rgba(255,255,255,.1)"></div>
<span class="t" style="left:1078.0px;top:501px;font-size:11px;line-height:15px;color:#000;">Open Shading Language</span>
<div class="sep" style="left:1050px;top:524px;width:320px"></div>
<svg class="a" style="left:1058.5px;top:532.0px" width="9" height="10"><path d="M0.4 0.5 L8 4.6 L0.4 8.7Z" fill="#2a2a2a"/></svg>
<span class="t" style="left:1070.9px;top:528.5px;font-size:12.3px;line-height:16px;color:#000;">Dimensions</span>
<svg class="a" style="left:1350px;top:534px" width="12" height="6"><rect x="1" y="1" width="1" height="1" fill="#5e5e5e"/><rect x="0" y="0" width="1" height="1" fill="#a4a4a4"/><rect x="1" y="4" width="1" height="1" fill="#5e5e5e"/><rect x="0" y="3" width="1" height="1" fill="#a4a4a4"/><rect x="4" y="1" width="1" height="1" fill="#5e5e5e"/><rect x="3" y="0" width="1" height="1" fill="#a4a4a4"/><rect x="4" y="4" width="1" height="1" fill="#5e5e5e"/><rect x="3" y="3" width="1" height="1" fill="#a4a4a4"/><rect x="7" y="1" width="1" height="1" fill="#5e5e5e"/><rect x="6" y="0" width="1" height="1" fill="#a4a4a4"/><rect x="7" y="4" width="1" height="1" fill="#5e5e5e"/><rect x="6" y="3" width="1" height="1" fill="#a4a4a4"/><rect x="10" y="1" width="1" height="1" fill="#5e5e5e"/><rect x="9" y="0" width="1" height="1" fill="#a4a4a4"/><rect x="10" y="4" width="1" height="1" fill="#5e5e5e"/><rect x="9" y="3" width="1" height="1" fill="#a4a4a4"/></svg>
<div class="sep" style="left:1050px;top:548px;width:320px"></div>
<svg class="a" style="left:1058.5px;top:556.0px" width="9" height="10"><path d="M0.4 0.5 L8 4.6 L0.4 8.7Z" fill="#2a2a2a"/></svg>
<span class="t" style="left:1070.9px;top:552.59px;font-size:12.3px;line-height:16px;color:#000;">Metadata</span>
<svg class="a" style="left:1350px;top:558px" width="12" height="6"><rect x="1" y="1" width="1" height="1" fill="#5e5e5e"/><rect x="0" y="0" width="1" height="1" fill="#a4a4a4"/><rect x="1" y="4" width="1" height="1" fill="#5e5e5e"/><rect x="0" y="3" width="1" height="1" fill="#a4a4a4"/><rect x="4" y="1" width="1" height="1" fill="#5e5e5e"/><rect x="3" y="0" width="1" height="1" fill="#a4a4a4"/><rect x="4" y="4" width="1" height="1" fill="#5e5e5e"/><rect x="3" y="3" width="1" height="1" fill="#a4a4a4"/><rect x="7" y="1" width="1" height="1" fill="#5e5e5e"/><rect x="6" y="0" width="1" height="1" fill="#a4a4a4"/><rect x="7" y="4" width="1" height="1" fill="#5e5e5e"/><rect x="6" y="3" width="1" height="1" fill="#a4a4a4"/><rect x="10" y="1" width="1" height="1" fill="#5e5e5e"/><rect x="9" y="0" width="1" height="1" fill="#a4a4a4"/><rect x="10" y="4" width="1" height="1" fill="#5e5e5e"/><rect x="9" y="3" width="1" height="1" fill="#a4a4a4"/></svg>
<div class="sep" style="left:1050px;top:572px;width:320px"></div>
<svg class="a" style="left:1058.5px;top:580.0px" width="9" height="10"><path d="M0.4 0.5 L8 4.6 L0.4 8.7Z" fill="#2a2a2a"/></svg>
<span class="t" style="left:1070.9px;top:576.68px;font-size:12.3px;line-height:16px;color:#000;">Output</span>
<svg class="a" style="left:1350px;top:582px" width="12" height="6"><rect x="1" y="1" width="1" height="1" fill="#5e5e5e"/><rect x="0" y="0" width="1" height="1" fill="#a4a4a4"/><rect x="1" y="4" width="1" height="1" fill="#5e5e5e"/><rect x="0" y="3" width="1" height="1" fill="#a4a4a4"/><rect x="4" y="1" width="1" height="1" fill="#5e5e5e"/><rect x="3" y="0" width="1" height="1" fill="#a4a4a4"/><rect x="4" y="4" width="1" height="1" fill="#5e5e5e"/><rect x="3" y="3" width="1" height="1" fill="#a4a4a4"/><rect x="7" y="1" width="1" height="1" fill="#5e5e5e"/><rect x="6" y="0" width="1" height="1" fill="#a4a4a4"/><rect x="7" y="4" width="1" height="1" fill="#5e5e5e"/><rect x="6" y="3" width="1" height="1" fill="#a4a4a4"/><rect x="10" y="1" width="1" height="1" fill="#5e5e5e"/><rect x="9" y="0" width="1" height="1" fill="#a4a4a4"/><rect x="10" y="4" width="1" height="1" fill="#5e5e5e"/><rect x="9" y="3" width="1" height="1" fill="#a4a4a4"/></svg>
<div class="sep" style="left:1050px;top:596px;width:320px"></div>
<svg class="a" style="left:1058.5px;top:604.0px" width="9" height="10"><path d="M0.4 0.5 L8 4.6 L0.4 8.7Z" fill="#2a2a2a"/></svg>
<div class="r" style="left:1071px;top:602px;width:14px;height:14px;border-radius:3px;border:1px solid #2e2e2e;background:linear-gradient(#4c4c4c,#5a5a5a);box-shadow:0 1px 0 rgba(255,255,255,.1)"></div>
<span class="t" style="left:1090.6px;top:600.77px;font-size:12.3px;line-height:16px;color:#000;">Freestyle</span>
<svg class="a" style="left:1350px;top:606px" width="12" height="6"><rect x="1" y="1" width="1" height="1" fill="#5e5e5e"/><rect x="0" y="0" width="1" height="1" fill="#a4a4a4"/><rect x="1" y="4" width="1" height="1" fill="#5e5e5e"/><rect x="0" y="3" width="1" height="1" fill="#a4a4a4"/><rect x="4" y="1" width="1" height="1" fill="#5e5e5e"/><rect x="3" y="0" width="1" height="1" fill="#a4a4a4"/><rect x="4" y="4" width="1" height="1" fill="#5e5e5e"/><rect x="3" y="3" width="1" height="1" fill="#a4a4a4"/><rect x="7" y="1" width="1" height="1" fill="#5e5e5e"/><rect x="6" y="0" width="1" height="1" fill="#a4a4a4"/><rect x="7" y="4" width="1" height="1" fill="#5e5e5e"/><rect x="6" y="3" width="1" height="1" fill="#a4a4a4"/><rect x="10" y="1" width="1" height="1" fill="#5e5e5e"/><rect x="9" y="0" width="1" height="1" fill="#a4a4a4"/><rect x="10" y="4" width="1" height="1" fill="#5e5e5e"/><rect x="9" y="3" width="1" height="1" fill="#a4a4a4"/></svg>
<div class="sep" style="left:1050px;top:620px;width:320px"></div>
<svg class="a" style="left:1058.5px;top:628.0px" width="9" height="10"><path d="M0.4 0.5 L8 4.6 L0.4 8.7Z" fill="#2a2a2a"/></svg>
<span class="t" style="left:1070.9px;top:624.86px;font-size:12.3px;line-height:16px;color:#000;">Sampling</span>
<svg class="a" style="left:1350px;top:630px" width="12" height="6"><rect x="1" y="1" width="1" height="1" fill="#5e5e5e"/><rect x="0" y="0" width="1" height="1" fill="#a4a4a4"/><rect x="1" y="4" width="1" height="1" fill="#5e5e5e"/><rect x="0" y="3" width="1" height="1" fill="#a4a4a4"/><rect x="4" y="1" width="1" height="1" fill="#5e5e5e"/><rect x="3" y="0" width="1" height="1" fill="#a4a4a4"/><rect x="4" y="4" width="1" height="1" fill="#5e5e5e"/><rect x="3" y="3" width="1" height="1" fill="#a4a4a4"/><rect x="7" y="1" width="1" height="1" fill="#5e5e5e"/><rect x="6" y="0" width="1" height="1" fill="#a4a4a4"/><rect x="7" y="4" width="1" height="1" fill="#5e5e5e"/><rect x="6" y="3" width="1" height="1" fill="#a4a4a4"/><rect x="10" y="1" width="1" height="1" fill="#5e5e5e"/><rect x="9" y="0" width="1" height="1" fill="#a4a4a4"/><rect x="10" y="4" width="1" height="1" fill="#5e5e5e"/><rect x="9" y="3" width="1" height="1" fill="#a4a4a4"/></svg>
<div class="sep" style="left:1050px;top:644px;width:320px"></div>
<svg class="a" style="left:1058.5px;top:652.0px" width="9" height="10"><path d="M0.4 0.5 L8 4.6 L0.4 8.7Z" fill="#2a2a2a"/></svg>
<span class="t" style="left:1070.9px;top:648.95px;font-size:12.3px;line-height:16px;color:#000;">Geometry</span>
<svg class="a" style="left:1350px;top:654px" width="12" height="6"><rect x="1" y="1" width="1" height="1" fill="#5e5e5e"/><rect x="0" y="0" width="1" height="1" fill="#a4a4a4"/><rect x="1" y="4" width="1" height="1" fill="#5e5e5e"/><rect x="0" y="3" width="1" height="1" fill="#a4a4a4"/><rect x="4" y="1" width="1" height="1" fill="#5e5e5e"/><rect x="3" y="0" width="1" height="1" fill="#a4a4a4"/><rect x="4" y="4" width="1" height="1" fill="#5e5e5e"/><rect x="3" y="3" width="1" height="1" fill="#a4a4a4"/><rect x="7" y="1" width="1" height="1" fill="#5e5e5e"/><rect x="6" y="0" width="1" height="1" fill="#a4a4a4"/><rect x="7" y="4" width="1" height="1" fill="#5e5e5e"/><rect x="6" y="3" width="1" height="1" fill="#a4a4a4"/><rect x="10" y="1" width="1" height="1" fill="#5e5e5e"/><rect x="9" y="0" width="1" height="1" fill="#a4a4a4"/><rect x="10" y="4" width="1" height="1" fill="#5e5e5e"/><rect x="9" y="3" width="1" height="1" fill="#a4a4a4"/></svg>
<div class="sep" style="left:1050px;top:668px;width:320px"></div>
<svg class="a" style="left:1058.5px;top:676.0px" width="9" height="10"><path d="M0.4 0.5 L8 4.6 L0.4 8.7Z" fill="#2a2a2a"/></svg>
<span class="t" style="left:1070.9px;top:673.04px;font-size:12.3px;line-height:16px;color:#000;">Light Paths</span>
<svg class="a" style="left:1350px;top:678px" width="12" height="6"><rect x="1" y="1" width="1" height="1" fill="#5e5e5e"/><rect x="0" y="0" width="1" height="1" fill="#a4a4a4"/><rect x="1" y="4" width="1" height="1" fill="#5e5e5e"/><rect x="0" y="3" width="1" height="1" fill="#a4a4a4"/><rect x="4" y="1" width="1" height="1" fill="#5e5e5e"/><rect x="3" y="0" width="1" height="1" fill="#a4a4a4"/><rect x="4" y="4" width="1" height="1" fill="#5e5e5e"/><rect x="3" y="3" width="1" height="1" fill="#a4a4a4"/><rect x="7" y="1" width="1" height="1" fill="#5e5e5e"/><rect x="6" y="0" width="1" height="1" fill="#a4a4a4"/><rect x="7" y="4" width="1" height="1" fill="#5e5e5e"/><rect x="6" y="3" width="1" height="1" fill="#a4a4a4"/><rect x="10" y="1" width="1" height="1" fill="#5e5e5e"/><rect x="9" y="0" width="1" height="1" fill="#a4a4a4"/><rect x="10" y="4" width="1" height="1" fill="#5e5e5e"/><rect x="9" y="3" width="1" height="1" fill="#a4a4a4"/></svg>
<div class="sep" style="left:1050px;top:692px;width:320px"></div>
<svg class="a" style="left:1058.5px;top:700.0px" width="9" height="10"><path d="M0.4 0.5 L8 4.6 L0.4 8.7Z" fill="#2a2a2a"/></svg>
<div class="r" style="left:1071px;top:698px;width:14px;height:14px;border-radius:3px;border:1px solid #2e2e2e;background:linear-gradient(#4c4c4c,#5a5a5a);box-shadow:0 1px 0 rgba(255,255,255,.1)"></div>
<span class="t" style="left:1090.6px;top:697.13px;font-size:12.3px;line-height:16px;color:#000;">Motion Blur</span>
<svg class="a" style="left:1350px;top:702px" width="12" height="6"><rect x="1" y="1" width="1" height="1" fill="#5e5e5e"/><rect x="0" y="0" width="1" height="1" fill="#a4a4a4"/><rect x="1" y="4" width="1" height="1" fill="#5e5e5e"/><rect x="0" y="3" width="1" height="1" fill="#a4a4a4"/><rect x="4" y="1" width="1" height="1" fill="#5e5e5e"/><rect x="3" y="0" width="1" height="1" fill="#a4a4a4"/><rect x="4" y="4" width="1" height="1" fill="#5e5e5e"/><rect x="3" y="3" width="1" height="1" fill="#a4a4a4"/><rect x="7" y="1" width="1" height="1" fill="#5e5e5e"/><rect x="6" y="0" width="1" height="1" fill="#a4a4a4"/><rect x="7" y="4" width="1" height="1" fill="#5e5e5e"/><rect x="6" y="3" width="1" height="1" fill="#a4a4a4"/><rect x="10" y="1" width="1" height="1" fill="#5e5e5e"/><rect x="9" y="0" width="1" height="1" fill="#a4a4a4"/><rect x="10" y="4" width="1" height="1" fill="#5e5e5e"/><rect x="9" y="3" width="1" height="1" fill="#a4a4a4"/></svg>
<div class="sep" style="left:1050px;top:716px;width:320px"></div>
<svg class="a" style="left:1058.5px;top:724.0px" width="9" height="10"><path d="M0.4 0.5 L8 4.6 L0.4 8.7Z" fill="#2a2a2a"/></svg>
<span class="t" style="left:1070.9px;top:721.22px;font-size:12.3px;line-height:16px;color:#000;">Film</span>
<svg class="a" style="left:1350px;top:726px" width="12" height="6"><rect x="1" y="1" width="1" height="1" fill="#5e5e5e"/><rect x="0" y="0" width="1" height="1" fill="#a4a4a4"/><rect x="1" y="4" width="1" height="1" fill="#5e5e5e"/><rect x="0" y="3" width="1" height="1" fill="#a4a4a4"/><rect x="4" y="1" width="1" height="1" fill="#5e5e5e"/><rect x="3" y="0" width="1" height="1" fill="#a4a4a4"/><rect x="4" y="4" width="1" height="1" fill="#5e5e5e"/><rect x="3" y="3" width="1" height="1" fill="#a4a4a4"/><rect x="7" y="1" width="1" height="1" fill="#5e5e5e"/><rect x="6" y="0" width="1" height="1" fill="#a4a4a4"/><rect x="7" y="4" width="1" height="1" fill="#5e5e5e"/><rect x="6" y="3" width="1" height="1" fill="#a4a4a4"/><rect x="10" y="1" width="1" height="1" fill="#5e5e5e"/><rect x="9" y="0" width="1" height="1" fill="#a4a4a4"/><rect x="10" y="4" width="1" height="1" fill="#5e5e5e"/><rect x="9" y="3" width="1" height="1" fill="#a4a4a4"/></svg>
<svg class="a" style="left:1054px;top:303px;" width="18" height="18" viewBox="0 0 18 18"><g transform="scale(1.13) rotate(45 8 8)"><path d="M5.4 1 L10.6 1 L10.6 2.4 L9.8 2.8 L9.8 7 L12 8.6 L12 9.8 L4 9.8 L4 8.6 L6.2 7 L6.2 2.8 L5.4 2.4Z" fill="#f2f2f2" stroke="#1a1a1a" stroke-width=".9" stroke-linejoin="round"/><path d="M8 9.8 L8 15.6" stroke="#1a1a1a" stroke-width="1.6"/><path d="M8 9.8 L8 15" stroke="#ddd" stroke-width=".6"/></g></svg>
<svg class="a" style="left:1076px;top:303.5px;" width="16" height="16" viewBox="0 0 16 16"><defs><linearGradient id="g18" x1="0" y1="0" x2="1" y2="0"><stop offset="0" stop-color="#3563ae"/><stop offset=".55" stop-color="#8db3ea"/><stop offset="1" stop-color="#2c5296"/></linearGradient><radialGradient id="g19" cx=".4" cy=".3"><stop offset="0" stop-color="#ffffff"/><stop offset="1" stop-color="#a9a9a0"/></radialGradient></defs><circle cx="4.2" cy="2.9" r="2.6" fill="#f8f8a0" opacity=".35"/><circle cx="4.2" cy="2.9" r="1.3" fill="#f2f2a8"/><path d="M9.2 2.6 Q12.2 .8 15.2 2.6 L15.2 10.6 Q12.2 12.4 9.2 10.6Z" fill="url(#g18)" stroke="#12254a" stroke-width=".9"/><ellipse cx="12.2" cy="2.7" rx="2.7" ry="1" fill="#b9d2f6" opacity=".9"/><circle cx="7" cy="11" r="3.6" fill="url(#g19)" stroke="#141414" stroke-width="1"/></svg>
<svg class="a" style="left:1057px;top:399px;" width="16" height="16" viewBox="0 0 16 16"><defs><radialGradient id="g20" cx=".4" cy=".35"><stop offset="0" stop-color="#eadfe4"/><stop offset=".5" stop-color="#76586a"/><stop offset="1" stop-color="#231a20"/></radialGradient></defs><path d="M1.2 4.6 L3 4.6 L3.6 3.2 L6.8 3.2 L7.4 4.6 L14.6 4.6 L14.6 13.6 L1.2 13.6Z" fill="#8f8f8f" stroke="#161616" stroke-width="1"/><rect x="1.8" y="5.2" width="12.2" height="1.6" fill="#e8e8e8"/><rect x="2.2" y="8" width="2.6" height="4.4" fill="#2e2e2e"/><circle cx="9.2" cy="9.6" r="3.3" fill="url(#g20)" stroke="#161616" stroke-width=".9"/><path d="M13 0 L13.7 2.6 L16 3.2 L13.7 3.9 L13 6.4 L12.3 3.9 L10 3.2 L12.3 2.6Z" fill="#fff27a"/><circle cx="13" cy="3.2" r="1" fill="#fffde0"/></svg>
<svg class="a" style="left:1160px;top:399px;" width="16" height="16" viewBox="0 0 16 16"><rect x="2.4" y="7.4" width="12" height="7.2" fill="#3a3a3a" stroke="#141414" stroke-width=".9"/><path d="M2.6 8.6 L14.2 8.6" stroke="#111" stroke-width="1.8"/><path d="M4 7.8 L5.6 7.8 M7.4 7.8 L9 7.8 M10.8 7.8 L12.4 7.8" stroke="#fff" stroke-width="1.6"/><rect x="3.6" y="10.6" width="9.6" height="2.8" fill="#7a7a7a" opacity=".8"/><path d="M3.6 12 L13.2 12" stroke="#c8c8c8" stroke-width=".6" stroke-dasharray="1.6 1"/><g transform="rotate(-27 2.6 6.6)"><rect x="2.2" y="4.4" width="12.6" height="2.6" fill="#1a1a1a" stroke="#111" stroke-width=".6"/><path d="M4 5.7 L5.8 5.7 M7.6 5.7 L9.4 5.7 M11.2 5.7 L13 5.7" stroke="#fff" stroke-width="1.7"/></g><circle cx="2.6" cy="7" r="1.3" fill="#c8d4f0" stroke="#334" stroke-width=".5"/></svg>
<svg class="a" style="left:1263px;top:399px;" width="16" height="16" viewBox="0 0 16 16"><path d="M1.6 5.6 L4.4 5.6 L8 2.2 L8 13.8 L4.4 10.4 L1.6 10.4Z" fill="#e6e6e6" stroke="#2a2a2a" stroke-width=".9" stroke-linejoin="round"/><path d="M4.6 5.8 L4.6 10.2" stroke="#666" stroke-width=".6"/><path d="M10 5.4 Q11.6 8 10 10.6" fill="none" stroke="#6c8ccc" stroke-width="1.1"/><path d="M11.8 3.6 Q14.6 8 11.8 12.4" fill="none" stroke="#6c8ccc" stroke-width="1.1"/></svg>
<svg class="a" style="left:1346px;top:424px;" width="16" height="16" viewBox="0 0 16 16"><rect x="3" y="7.4" width="10" height="7.4" rx="1" fill="#f0f0f0" stroke="#222" stroke-width=".9"/><path d="M5 7.4 L5 4.4 A3 3 0 0 1 11 4.4 L11 5.4" fill="none" stroke="#222" stroke-width="2.4"/><path d="M5 7.4 L5 4.4 A3 3 0 0 1 11 4.4 L11 5.4" fill="none" stroke="#e8e8e8" stroke-width="1.1"/></svg>
<div class="r" style="left:1031px;top:13px;width:14px;height:12px;background:#2f2f2f;border-radius:2px 0 0 2px"></div>
<svg class="a" style="left:1033px;top:15px" width="8" height="8"><path d="M4 .8 L4 7.2 M.8 4 L7.2 4" stroke="#8c8c8c" stroke-width="2"/></svg>
<svg class="a" style="left:1046px;top:255px;overflow:hidden" width="12" height="12"><defs><clipPath id="hc21"><path d="M0 0 L0 12 L12 12Z"/></clipPath></defs><g clip-path="url(#hc21)"><path d="M-20 0 L0 20" stroke="#f0f0f0" stroke-width="1"/><path d="M-18.5 0 L1.5 20" stroke="#101010" stroke-width="1"/><path d="M-17 0 L3 20" stroke="#f0f0f0" stroke-width="1"/><path d="M-15.5 0 L4.5 20" stroke="#101010" stroke-width="1"/><path d="M-14 0 L6 20" stroke="#f0f0f0" stroke-width="1"/><path d="M-12.5 0 L7.5 20" stroke="#101010" stroke-width="1"/><path d="M-11 0 L9 20" stroke="#f0f0f0" stroke-width="1"/><path d="M-9.5 0 L10.5 20" stroke="#101010" stroke-width="1"/><path d="M-8 0 L12 20" stroke="#f0f0f0" stroke-width="1"/><path d="M-6.5 0 L13.5 20" stroke="#101010" stroke-width="1"/><path d="M-5 0 L15 20" stroke="#f0f0f0" stroke-width="1"/><path d="M-3.5 0 L16.5 20" stroke="#101010" stroke-width="1"/><path d="M-2 0 L18 20" stroke="#f0f0f0" stroke-width="1"/><path d="M-0.5 0 L19.5 20" stroke="#101010" stroke-width="1"/><path d="M1 0 L21 20" stroke="#f0f0f0" stroke-width="1"/><path d="M2.5 0 L22.5 20" stroke="#101010" stroke-width="1"/><path d="M4 0 L24 20" stroke="#f0f0f0" stroke-width="1"/><path d="M5.5 0 L25.5 20" stroke="#101010" stroke-width="1"/><path d="M7 0 L27 20" stroke="#f0f0f0" stroke-width="1"/><path d="M8.5 0 L28.5 20" stroke="#101010" stroke-width="1"/><path d="M10 0 L30 20" stroke="#f0f0f0" stroke-width="1"/><path d="M11.5 0 L31.5 20" stroke="#101010" stroke-width="1"/><path d="M13 0 L33 20" stroke="#f0f0f0" stroke-width="1"/><path d="M14.5 0 L34.5 20" stroke="#101010" stroke-width="1"/><path d="M16 0 L36 20" stroke="#f0f0f0" stroke-width="1"/><path d="M17.5 0 L37.5 20" stroke="#101010" stroke-width="1"/><path d="M19 0 L39 20" stroke="#f0f0f0" stroke-width="1"/><path d="M20.5 0 L40.5 20" stroke="#101010" stroke-width="1"/><path d="M22 0 L42 20" stroke="#f0f0f0" stroke-width="1"/><path d="M23.5 0 L43.5 20" stroke="#101010" stroke-width="1"/><path d="M25 0 L45 20" stroke="#f0f0f0" stroke-width="1"/><path d="M26.5 0 L46.5 20" stroke="#101010" stroke-width="1"/><path d="M28 0 L48 20" stroke="#f0f0f0" stroke-width="1"/><path d="M29.5 0 L49.5 20" stroke="#101010" stroke-width="1"/></g></svg>
<svg class="a" style="left:1034px;top:-8px;overflow:hidden" width="11" height="11"><defs><clipPath id="hc22"><path d="M0 0 L11 0 L11 11Z"/></clipPath></defs><g clip-path="url(#hc22)"><path d="M-20 0 L0 20" stroke="#f0f0f0" stroke-width="1"/><path d="M-18.5 0 L1.5 20" stroke="#101010" stroke-width="1"/><path d="M-17 0 L3 20" stroke="#f0f0f0" stroke-width="1"/><path d="M-15.5 0 L4.5 20" stroke="#101010" stroke-width="1"/><path d="M-14 0 L6 20" stroke="#f0f0f0" stroke-width="1"/><path d="M-12.5 0 L7.5 20" stroke="#101010" stroke-width="1"/><path d="M-11 0 L9 20" stroke="#f0f0f0" stroke-width="1"/><path d="M-9.5 0 L10.5 20" stroke="#101010" stroke-width="1"/><path d="M-8 0 L12 20" stroke="#f0f0f0" stroke-width="1"/><path d="M-6.5 0 L13.5 20" stroke="#101010" stroke-width="1"/><path d="M-5 0 L15 20" stroke="#f0f0f0" stroke-width="1"/><path d="M-3.5 0 L16.5 20" stroke="#101010" stroke-width="1"/><path d="M-2 0 L18 20" stroke="#f0f0f0" stroke-width="1"/><path d="M-0.5 0 L19.5 20" stroke="#101010" stroke-width="1"/><path d="M1 0 L21 20" stroke="#f0f0f0" stroke-width="1"/><path d="M2.5 0 L22.5 20" stroke="#101010" stroke-width="1"/><path d="M4 0 L24 20" stroke="#f0f0f0" stroke-width="1"/><path d="M5.5 0 L25.5 20" stroke="#101010" stroke-width="1"/><path d="M7 0 L27 20" stroke="#f0f0f0" stroke-width="1"/><path d="M8.5 0 L28.5 20" stroke="#101010" stroke-width="1"/><path d="M10 0 L30 20" stroke="#f0f0f0" stroke-width="1"/><path d="M11.5 0 L31.5 20" stroke="#101010" stroke-width="1"/><path d="M13 0 L33 20" stroke="#f0f0f0" stroke-width="1"/><path d="M14.5 0 L34.5 20" stroke="#101010" stroke-width="1"/><path d="M16 0 L36 20" stroke="#f0f0f0" stroke-width="1"/><path d="M17.5 0 L37.5 20" stroke="#101010" stroke-width="1"/><path d="M19 0 L39 20" stroke="#f0f0f0" stroke-width="1"/><path d="M20.5 0 L40.5 20" stroke="#101010" stroke-width="1"/><path d="M22 0 L42 20" stroke="#f0f0f0" stroke-width="1"/><path d="M23.5 0 L43.5 20" stroke="#101010" stroke-width="1"/><path d="M25 0 L45 20" stroke="#f0f0f0" stroke-width="1"/><path d="M26.5 0 L46.5 20" stroke="#101010" stroke-width="1"/><path d="M28 0 L48 20" stroke="#f0f0f0" stroke-width="1"/><path d="M29.5 0 L49.5 20" stroke="#101010" stroke-width="1"/></g></svg>
<svg class="a" style="left:1033px;top:726px;overflow:hidden" width="12" height="12"><defs><clipPath id="hc23"><path d="M0 0 L12 0 L12 12Z"/></clipPath></defs><g clip-path="url(#hc23)"><path d="M-20 0 L0 20" stroke="#f0f0f0" stroke-width="1"/><path d="M-18.5 0 L1.5 20" stroke="#101010" stroke-width="1"/><path d="M-17 0 L3 20" stroke="#f0f0f0" stroke-width="1"/><path d="M-15.5 0 L4.5 20" stroke="#101010" stroke-width="1"/><path d="M-14 0 L6 20" stroke="#f0f0f0" stroke-width="1"/><path d="M-12.5 0 L7.5 20" stroke="#101010" stroke-width="1"/><path d="M-11 0 L9 20" stroke="#f0f0f0" stroke-width="1"/><path d="M-9.5 0 L10.5 20" stroke="#101010" stroke-width="1"/><path d="M-8 0 L12 20" stroke="#f0f0f0" stroke-width="1"/><path d="M-6.5 0 L13.5 20" stroke="#101010" stroke-width="1"/><path d="M-5 0 L15 20" stroke="#f0f0f0" stroke-width="1"/><path d="M-3.5 0 L16.5 20" stroke="#101010" stroke-width="1"/><path d="M-2 0 L18 20" stroke="#f0f0f0" stroke-width="1"/><path d="M-0.5 0 L19.5 20" stroke="#101010" stroke-width="1"/><path d="M1 0 L21 20" stroke="#f0f0f0" stroke-width="1"/><path d="M2.5 0 L22.5 20" stroke="#101010" stroke-width="1"/><path d="M4 0 L24 20" stroke="#f0f0f0" stroke-width="1"/><path d="M5.5 0 L25.5 20" stroke="#101010" stroke-width="1"/><path d="M7 0 L27 20" stroke="#f0f0f0" stroke-width="1"/><path d="M8.5 0 L28.5 20" stroke="#101010" stroke-width="1"/><path d="M10 0 L30 20" stroke="#f0f0f0" stroke-width="1"/><path d="M11.5 0 L31.5 20" stroke="#101010" stroke-width="1"/><path d="M13 0 L33 20" stroke="#f0f0f0" stroke-width="1"/><path d="M14.5 0 L34.5 20" stroke="#101010" stroke-width="1"/><path d="M16 0 L36 20" stroke="#f0f0f0" stroke-width="1"/><path d="M17.5 0 L37.5 20" stroke="#101010" stroke-width="1"/><path d="M19 0 L39 20" stroke="#f0f0f0" stroke-width="1"/><path d="M20.5 0 L40.5 20" stroke="#101010" stroke-width="1"/><path d="M22 0 L42 20" stroke="#f0f0f0" stroke-width="1"/><path d="M23.5 0 L43.5 20" stroke="#101010" stroke-width="1"/><path d="M25 0 L45 20" stroke="#f0f0f0" stroke-width="1"/><path d="M26.5 0 L46.5 20" stroke="#101010" stroke-width="1"/><path d="M28 0 L48 20" stroke="#f0f0f0" stroke-width="1"/><path d="M29.5 0 L49.5 20" stroke="#101010" stroke-width="1"/></g></svg>
</div></body></html>
